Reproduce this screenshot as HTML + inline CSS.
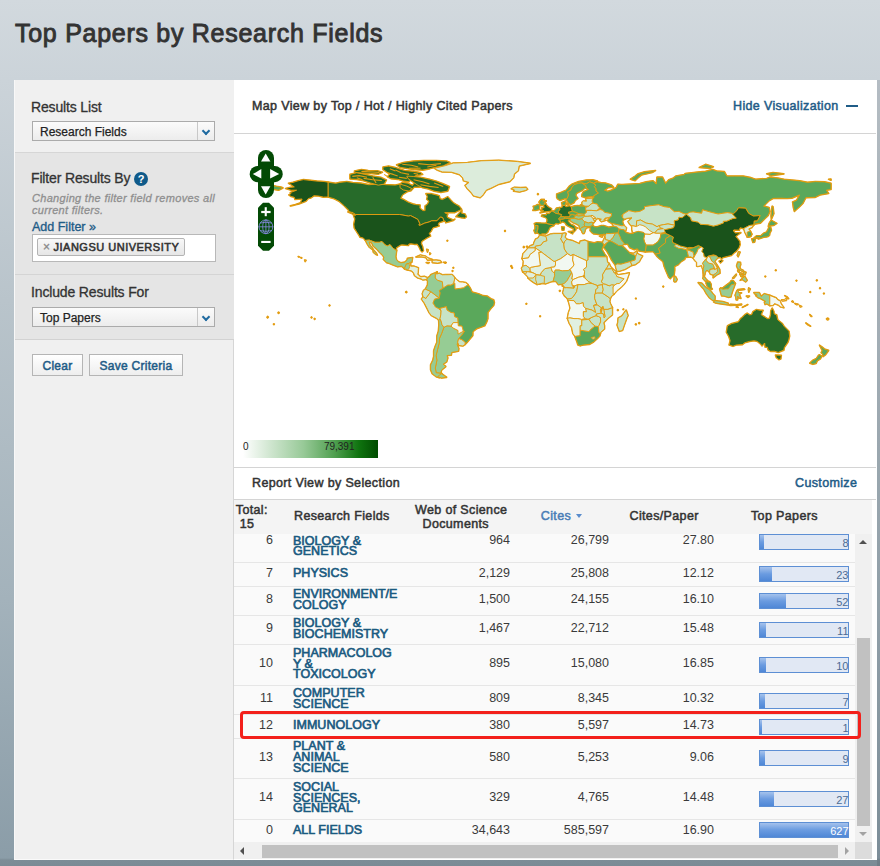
<!DOCTYPE html>
<html><head><meta charset="utf-8">
<style>
*{box-sizing:border-box;margin:0;padding:0}
html,body{width:880px;height:866px;overflow:hidden}
body{position:relative;font-family:"Liberation Sans",sans-serif;color:#333;
background:linear-gradient(to bottom,#d2d9de 0px,#cbd3d9 80px,#b9c4cb 300px,#a3b2bb 600px,#8b9da8 858px,#7c8d97 860px,#7a8b95 866px)}
.a{position:absolute;white-space:nowrap}
#title{left:15px;top:18px;font-size:25px;font-weight:normal;-webkit-text-stroke:0.9px #333;letter-spacing:0.72px;color:#333;line-height:30px}
#side{left:14px;top:80px;width:220px;height:780px;background:#f0f0f0;border-left:1px solid #f8f8f8;border-bottom:1px solid #fafafa;border-right:1px solid #d6d6d6}
.sec{position:absolute;left:0;width:219px}
.lbl{font-size:14px;color:#333;letter-spacing:-0.15px;-webkit-text-stroke:0.3px currentColor}
.dd{position:absolute;left:17px;width:183px;height:20px;border:1px solid #ababab;background:linear-gradient(#fbfbfb,#ececec);font-size:12px;line-height:20px;padding-left:7px;color:#222;-webkit-text-stroke:0.25px currentColor}
.dd .ar{position:absolute;right:0;top:0;width:17px;height:18px;border-left:1px solid #c8c8c8}
.btn{position:absolute;top:274px;height:22px;border:1px solid #b5b5b5;background:linear-gradient(#ffffff,#eeeeee);font-size:12px;font-weight:normal;-webkit-text-stroke:0.5px currentColor;letter-spacing:0.28px;color:#1f5c87;text-align:center;line-height:22px}
.help{left:119px;top:92px;width:14px;height:14px;border-radius:50%;background:#0f5a8a;color:#fff;font-size:11px;font-weight:bold;text-align:center;line-height:14px}
.hint{font-size:11px;font-style:italic;color:#8f8f8f;-webkit-text-stroke:0.3px currentColor;line-height:11.5px;letter-spacing:0.3px}
.addf{font-size:12.5px;color:#1f5c87;line-height:14px;-webkit-text-stroke:0.35px currentColor}
.fbox{left:17px;top:154px;width:184px;height:28px;background:#fff;border:1px solid #b8b8b8}
.tag{position:absolute;left:4px;top:3px;height:18px;width:148px;border:1px solid #b4b4b4;border-radius:2px;background:linear-gradient(#f8f8f8,#e6e6e6);font-size:11px;font-weight:normal;-webkit-text-stroke:0.55px #333;color:#333;line-height:16px;letter-spacing:0.5px;padding-left:5px}
.tag .x{color:#888;-webkit-text-stroke:0.3px #888;font-size:12px;margin-right:3px}
.chev{position:absolute;left:5px;top:6px;width:6px;height:6px;border-right:2px solid #1f6aa0;border-bottom:2px solid #1f6aa0;transform:rotate(45deg)}
#main{left:234px;top:80px;width:643px;height:780px;background:#fff}
.hd{font-size:12.5px;font-weight:bold}
</style>
<style>
#main{left:234px;top:80px;width:643px;height:780px;background:#fff}
.hd{font-size:12.5px;font-weight:normal;-webkit-text-stroke:0.5px currentColor;letter-spacing:0.36px;line-height:14px;color:#333}
.ln{position:absolute;left:0;width:642px;height:1px;background:#d4d4d4}
.th{position:absolute;font-size:12.5px;font-weight:normal;-webkit-text-stroke:0.5px currentColor;letter-spacing:0.36px;line-height:14px;color:#333;white-space:nowrap}
.row{position:absolute;left:0;width:621px;background:#fafafa;border-top:1px solid #e6e6e6}
.c{position:absolute;top:0;bottom:0;display:flex;align-items:center}
.num{font-size:12.5px;line-height:11px;color:#3a3a3a;justify-content:flex-end;padding-bottom:4px}
.fld{font-size:12.5px;font-weight:normal;-webkit-text-stroke:0.65px currentColor;letter-spacing:0.02px;line-height:10.9px;color:#1a5a80;padding-bottom:2px;white-space:nowrap}
.bar{position:absolute;left:525px;width:90px;height:16px;border:1px solid #5d8fd4;background:#e1e8f4}
.bar .f{position:absolute;left:0;top:0;bottom:0;background:linear-gradient(#a5c2ec,#6a9be0 50%,#4f87d6)}
.bar .v{position:absolute;right:-0.5px;top:2px;font-size:11px;line-height:13px;color:#4c6b95}
</style>
</head><body>
<div class="a" id="title">Top Papers by Research Fields</div>
<div class="a" id="side">
  <div class="sec" style="top:0;height:72px;background:#f0f0f0"></div>
  <div class="sec" style="top:72px;height:1px;background:#d6d6d6"></div>
  <div class="sec" style="top:73px;height:121px;background:#e5e5e5"></div>
  <div class="sec" style="top:194px;height:1px;background:#d4d4d4"></div>
  <div class="sec" style="top:195px;height:64px;background:#e5e5e5"></div>
  <div class="sec" style="top:259px;height:1px;background:#d2d2d2"></div>
  <div class="a lbl" style="left:16px;top:19px">Results List</div>
  <div class="dd" style="top:41px">Research Fields<div class="ar"><i class="chev"></i></div></div>
  <div class="a lbl" style="left:16px;top:90px">Filter Results By</div>
  <div class="a help">?</div>
  <div class="a hint" style="left:17px;top:113px">Changing the filter field removes all<br>current filters.</div>
  <div class="a addf" style="left:17px;top:140px">Add Filter &raquo;</div>
  <div class="a fbox"><div class="tag"><span class="x">&times;</span>JIANGSU UNIVERSITY</div></div>
  <div class="a lbl" style="left:16px;top:204px">Include Results For</div>
  <div class="dd" style="top:227px">Top Papers<div class="ar"><i class="chev"></i></div></div>
  <div class="btn" style="left:17px;width:51px">Clear</div>
  <div class="btn" style="left:74px;width:94px">Save Criteria</div>
</div>
<div class="a" style="left:877px;top:80px;width:3px;height:786px;background:rgba(30,40,50,0.13)"></div>
<div class="a" id="main">
<div class="a hd" style="left:18px;top:19.47px">Map View by Top / Hot / Highly Cited Papers</div>
<div class="a hd" style="left:499px;top:19.47px;color:#1f5c87">Hide Visualization</div>
<div class="a" style="left:612px;top:25px;width:12px;height:2px;background:#1f5c87"></div>
<div class="ln" style="top:53px"></div>
<div class="a" style="left:0;top:54px;width:643px;height:333px;overflow:hidden"><svg width="643" height="333" viewBox="234 134 643 333" style="position:absolute;left:0;top:0">
<g stroke="#e39c10" stroke-width="1.7" stroke-linejoin="round" fill="#e39c10">
<polygon points="328.0,182.2 335.8,183.3 339.7,182.4 346.8,181.6 353.0,182.6 360.9,183.2 368.7,184.7 379.7,184.0 385.9,184.7 395.3,185.1 400.0,184.0 402.4,182.4 407.9,183.2 412.6,185.5 414.9,181.9 422.0,184.0 420.4,187.1 414.1,187.1 411.0,190.7 407.1,191.8 402.4,194.9 400.7,198.4 403.2,199.3 407.9,202.0 412.6,203.9 415.7,204.6 420.1,205.0 419.9,208.2 422.8,210.6 425.1,210.6 425.1,205.9 427.5,204.3 429.0,201.2 426.7,199.2 427.5,196.5 425.9,193.7 431.4,193.7 436.1,194.9 439.2,195.7 440.0,198.8 442.3,199.6 445.5,198.1 447.8,196.8 451.0,200.4 453.3,202.8 455.7,204.3 458.8,205.9 461.6,209.3 459.1,210.6 454.9,212.6 444.7,212.6 447.8,214.5 447.0,215.6 447.4,217.5 453.3,220.0 454.9,219.2 453.3,220.5 449.4,221.6 445.8,222.8 445.2,221.1 443.9,221.1 442.7,217.7 440.5,217.0 436.9,220.8 431.7,220.8 429.0,222.0 424.8,223.1 419.6,225.5 418.7,225.0 419.8,223.9 417.9,219.5 416.0,218.4 410.5,215.6 408.5,216.1 399.7,214.5 355.7,214.5 353.0,213.0 349.1,211.7 348.3,209.8 344.4,205.9 338.9,201.2 334.2,198.8 328.0,197.0"/>
<polygon points="353.5,215.5 354.9,218.9 353.8,224.2 354.3,228.0 356.9,232.1 359.3,235.7 359.9,237.2 363.4,238.0 365.4,240.4 369.2,240.1 375.0,242.3 379.4,242.3 382.0,241.5 385.1,244.9 387.5,245.9 390.0,244.6 393.0,248.2 396.6,250.7 396.3,247.7 400.3,245.2 401.9,244.8 405.5,245.1 408.5,245.5 408.8,244.0 411.0,243.7 414.9,244.3 417.3,244.1 419.3,247.4 420.7,250.4 422.1,251.8 423.4,250.6 422.6,246.6 421.3,243.5 421.8,241.3 424.8,239.3 426.8,238.0 430.6,236.1 429.3,233.3 431.1,231.3 432.9,227.8 436.1,226.9 439.2,226.0 438.3,224.5 438.9,222.8 443.9,221.1 442.7,217.7 440.5,217.0 436.9,220.8 431.7,220.8 429.0,222.0 424.8,223.1 419.6,225.5 418.7,225.0 419.8,223.9 417.9,219.5 416.0,218.4 410.5,215.6 408.5,216.1 399.7,214.5 355.7,214.5"/>
<polygon points="328.0,182.2 324.0,181.5 317.0,181.1 310.7,180.4 303.4,179.6 298.2,180.8 293.0,182.4 288.5,183.3 292.7,185.8 294.3,186.9 290.3,187.4 285.6,188.5 291.1,190.2 296.6,190.2 290.3,192.6 291.0,193.5 288.8,194.9 291.1,196.5 294.3,197.3 295.0,199.5 302.1,199.0 300.5,202.8 293.5,205.3 290.3,205.9 299.0,203.9 306.0,201.2 308.4,198.5 311.0,197.9 313.9,195.7 318.6,196.0 323.3,197.1 328.0,197.0"/>
<polygon points="350.0,174.4 356.8,172.7 364.8,174.4 372.7,176.1 380.7,177.3 386.4,180.1 384.1,184.1 378.4,185.2 370.5,183.0 363.6,180.7 356.8,179.3 350.0,179.0"/>
<polygon points="354.5,171.0 361.4,169.5 368.2,170.5 377.3,170.8 382.4,172.2 378.4,174.1 370.5,173.4 361.4,173.0 354.5,172.3"/>
<polygon points="383.0,167.0 388.6,166.2 395.5,167.6 398.9,168.8 404.5,170.5 413.6,171.4 420.5,172.7 422.7,174.4 415.9,175.6 411.9,177.8 409.1,181.8 403.4,180.9 397.7,179.3 390.9,178.6 387.5,176.7 389.8,174.1 386.4,171.8 383.0,169.5"/>
<polygon points="396.6,164.8 403.4,162.5 413.6,161.1 423.9,160.5 436.4,160.5 446.6,161.1 450.0,162.5 443.2,165.9 436.4,167.0 429.5,168.8 422.7,170.1 413.6,169.5 406.8,168.4 400.0,167.3"/>
<polygon points="406.8,176.1 413.6,176.5 420.5,177.3 429.5,179.3 436.4,181.2 443.2,183.9 449.4,186.6 447.7,191.1 440.9,192.3 434.1,191.1 428.4,188.9 422.7,187.7 418.2,185.5 414.8,183.2 411.4,180.9 408.0,178.6"/>
<polygon points="400.0,184.1 406.8,186.1 411.9,188.6 409.1,191.1 403.4,190.0 400.0,187.7"/>
<polygon points="456.0,216.7 461.9,210.4 461.6,213.3 465.1,214.0 466.3,216.9 464.8,218.1 461.3,217.7 457.2,216.7"/>
<polygon points="355.4,215.5 352.2,213.7 347.9,211.9 353.0,212.5"/>
<polygon points="434.5,168.3 445.5,165.6 453.3,163.1 467.4,162.5 481.5,160.8 498.8,160.3 517.6,161.6 530.1,163.4 519.1,165.9 518.3,170.6 514.4,173.8 513.6,177.7 509.7,181.6 498.8,184.3 490.9,188.2 486.2,190.2 483.1,194.9 480.1,197.6 473.7,196.0 470.5,191.8 467.4,188.7 465.1,185.5 469.0,182.4 463.5,180.8 462.7,177.7 459.6,174.6 451.7,172.2 442.3,171.9 436.9,169.9"/>
<polygon points="511.3,188.7 514.4,187.3 520.7,187.6 526.2,187.4 527.6,189.3 525.4,190.5 519.6,192.0 513.6,191.2 514.7,190.1"/>
<polygon points="365.4,240.4 369.2,240.1 375.0,242.3 379.4,242.3 382.0,241.5 385.1,244.9 387.5,245.9 390.0,244.6 393.0,248.2 396.6,250.7 395.8,256.8 396.6,260.0 398.5,261.8 400.8,262.8 404.7,262.2 407.1,260.1 407.4,258.4 412.6,257.6 411.8,262.3 410.5,262.3 409.1,263.4 406.3,264.2 407.1,266.2 404.4,268.6 401.6,266.2 397.7,266.7 393.8,265.3 389.5,263.4 386.7,262.6 383.4,259.3 383.9,257.1 382.0,254.5 378.9,251.7 377.5,249.8 375.0,247.6 373.1,245.9 371.5,242.4 369.0,241.9 369.9,245.1 372.1,247.7 374.0,250.6 376.5,253.4 377.3,255.1 376.1,254.5 373.4,252.4 372.9,249.8 369.5,247.4 367.4,244.3"/>
<polygon points="404.4,268.6 406.3,264.2 409.1,263.4 410.5,262.3 410.7,266.2 414.1,266.2 418.4,267.8 418.1,272.5 417.7,274.2 420.4,276.9 424.3,276.4 427.6,277.7 426.4,279.5 422.8,279.9 421.2,278.8 417.9,278.0 414.6,275.6 413.4,272.5 411.6,270.9 408.7,270.1 405.5,269.4"/>
<polygon points="404.4,268.6 406.3,264.2 409.1,263.4 409.6,266.4 409.1,268.6 407.6,269.7"/>
<polygon points="415.9,257.0 420.4,255.1 425.1,256.0 428.2,258.1 432.6,259.6 427.5,260.1 425.9,257.6 421.2,256.7"/>
<polygon points="432.3,260.3 436.1,260.1 440.0,260.7 441.7,262.3 437.6,263.1 432.3,262.6"/>
<polygon points="426.2,262.5 429.3,262.6 428.2,263.4"/>
<polygon points="443.6,262.3 446.1,262.5 445.5,263.1"/>
<polygon points="426.7,249.3 428.2,249.8 427.5,252.1"/>
<polygon points="429.8,252.9 430.6,253.7 429.8,254.5"/>
<polygon points="304.6,260.0 306.0,260.3 305.2,261.5"/>
<polygon points="300.8,257.5 301.8,257.9 301.3,258.1"/>
<polygon points="298.2,256.5 299.3,256.8 299.0,257.1"/>
<polygon points="468.0,284.7 470.5,288.5 472.1,292.1 478.4,293.7 483.1,295.7 487.0,296.0 490.9,298.8 493.7,299.9 494.4,302.6 493.7,305.4 490.9,308.5 487.9,312.5 487.8,318.7 486.7,321.9 484.7,325.8 480.7,327.3 476.8,328.6 472.9,331.7 472.7,335.6 469.8,339.1 466.6,343.0 465.2,344.3 465.1,342.2 461.8,339.7 458.6,338.6 461.3,335.5 464.4,331.4 463.3,331.3 462.7,328.9 461.9,326.1 458.3,325.9 458.0,322.6 457.7,317.9 454.6,316.7 454.1,312.9 451.0,312.5 447.0,310.1 446.4,306.7 440.0,308.4 438.4,308.5 435.4,307.0 434.5,305.4 432.9,303.1 434.5,299.1 439.2,297.9 440.0,292.9 439.2,290.5 443.1,288.0 447.8,285.0 451.0,285.0 454.9,283.2 455.0,288.9 460.4,288.3 463.5,287.7"/>
<polygon points="464.4,331.4 461.3,335.5 458.6,338.6 457.7,342.2 457.2,344.7 458.8,348.5 458.5,351.2 451.7,352.4 451.3,355.2 447.0,355.5 447.8,357.9 446.7,361.8 443.1,364.2 445.8,366.5 441.6,370.1 440.8,372.8 441.7,373.4 436.2,372.8 435.3,368.1 436.9,360.2 436.1,355.5 437.6,349.3 439.2,343.0 439.5,338.3 441.6,333.6 443.9,327.3 447.0,325.8 451.0,326.1 453.3,328.1 458.0,330.5 463.3,331.3"/>
<polygon points="440.0,318.7 438.7,320.0 438.9,325.0 438.4,331.3 436.9,336.0 436.9,342.2 435.3,346.1 433.7,350.8 433.7,356.3 432.9,360.2 430.6,364.9 430.6,369.6 432.2,373.6 436.1,376.7 439.2,377.8 441.7,373.4 436.2,372.8 435.3,368.1 436.9,360.2 436.1,355.5 437.6,349.3 439.2,343.0 439.5,338.3 441.6,333.6 443.9,327.3 442.0,324.7 441.1,321.1"/>
<polygon points="441.6,373.7 446.6,377.3 441.6,378.0 437.6,376.7 440.0,374.7"/>
<polygon points="423.1,296.8 421.5,299.1 424.3,303.1 427.5,309.3 429.0,312.5 431.4,315.6 436.9,318.4 438.7,320.0 440.0,318.7 440.8,314.8 441.1,310.9 438.4,308.5 435.4,307.0 434.5,305.4 432.9,303.1 434.5,299.1 439.2,297.9 435.3,295.1 430.9,291.6 427.5,296.0 425.9,298.4"/>
<polygon points="423.1,296.8 425.9,298.4 427.5,296.0 430.9,291.6 427.5,290.0 425.4,289.1 423.5,290.5 422.3,293.7"/>
<polygon points="427.6,277.7 429.8,276.4 430.6,274.8 432.9,273.7 435.3,272.8 437.2,271.9 435.4,274.1 435.3,278.0 437.6,280.3 442.3,281.6 443.1,288.0 439.2,290.5 440.0,292.9 439.2,297.9 435.3,295.1 430.9,291.6 427.5,290.0 425.4,289.1 427.5,285.0 427.6,281.1 426.8,279.9"/>
<polygon points="437.2,271.9 436.4,274.1 439.2,273.3 442.3,274.8 445.5,274.7 448.6,274.7 451.7,274.5 453.3,275.6 454.9,278.0 453.8,283.2 451.0,285.0 447.8,285.0 443.1,288.0 442.3,281.6 437.6,280.3 435.3,278.0 435.4,274.1"/>
<polygon points="454.9,278.0 457.2,280.3 459.6,281.9 462.7,282.1 465.8,282.7 468.0,284.7 463.5,287.7 460.4,288.3 455.0,288.9 454.9,283.2 453.8,283.2"/>
<polygon points="440.0,318.7 441.1,321.1 442.0,324.7 443.9,327.3 447.0,325.8 451.0,326.1 453.3,322.6 458.0,322.6 457.7,317.9 454.6,316.7 454.1,312.9 451.0,312.5 447.0,310.1 446.4,306.7 440.0,308.4 441.1,310.9 440.8,314.8"/>
<polygon points="458.0,322.6 458.3,325.9 461.9,326.1 462.7,328.9 463.3,331.3 458.0,334.1 458.0,330.5 453.3,328.1 451.0,326.1 453.3,322.6"/>
<polygon points="465.2,344.3 462.9,346.0 458.8,345.4 457.7,342.2 458.6,338.6 461.8,339.7 465.1,342.2"/>
<polygon points="597.2,181.9 600.6,182.7 605.3,183.0 611.6,185.1 613.5,187.1 608.4,187.6 604.5,190.2 607.7,191.3 611.6,190.1 616.3,187.6 617.8,184.3 621.8,184.6 632.0,184.0 639.8,183.5 646.1,181.9 653.1,180.8 656.2,184.1 657.0,177.2 662.5,177.2 665.6,183.5 668.8,179.7 673.5,178.0 675.8,176.1 684.4,174.6 685.2,173.5 697.8,172.1 705.6,171.4 712.7,169.5 716.6,171.0 724.4,171.7 726.8,176.1 734.6,176.1 743.2,176.1 751.0,177.7 755.7,179.3 766.7,178.5 769.8,177.2 777.7,178.0 783.9,179.3 799.6,180.8 807.5,182.4 815.3,181.6 824.7,181.9 831.0,183.3 831.0,189.4 826.3,190.2 828.6,193.4 820.0,194.9 815.3,197.3 805.9,197.6 804.3,200.7 802.8,203.5 799.6,206.7 794.4,211.4 793.4,207.5 792.6,202.0 796.5,200.4 799.6,194.9 791.8,198.1 787.1,198.5 780.8,198.2 773.0,198.4 769.1,200.7 763.6,206.1 769.1,207.5 769.8,211.4 768.3,215.3 765.1,218.4 760.4,223.1 755.4,223.9 753.7,225.0 754.2,220.9 757.3,220.8 760.1,215.6 753.4,216.1 748.7,213.4 745.6,208.2 738.5,207.8 736.9,210.6 733.5,213.7 731.5,213.3 727.5,212.6 718.1,214.0 711.9,212.5 702.5,209.8 701.7,213.3 693.1,211.9 686.5,214.2 683.7,213.7 679.0,211.4 674.3,211.7 669.6,207.5 664.1,206.7 658.6,204.8 650.8,205.7 644.5,206.7 644.5,209.0 639.8,211.4 635.1,212.0 628.8,210.6 624.9,213.0 622.9,214.2 621.8,215.3 622.5,217.7 624.9,219.2 623.3,220.0 622.5,221.6 623.3,223.9 624.1,225.5 621.8,225.8 617.1,224.7 611.6,223.3 608.4,221.6 607.7,220.3 610.0,217.7 608.8,217.5 611.1,216.4 611.6,213.7 608.4,213.1 604.5,212.3 602.8,210.3 600.1,209.5 600.1,207.8 598.3,206.7 597.3,204.2 593.1,203.2 592.0,201.2 592.8,198.2 594.3,197.0 592.6,196.5 595.1,194.9 598.3,192.9 595.9,191.0 595.9,188.7 594.3,186.6 595.9,185.2 594.0,184.0 593.6,183.2"/>
<polygon points="581.8,204.6 584.6,206.1 579.6,206.1 580.2,205.1"/>
<polygon points="630.4,179.3 635.1,176.1 638.2,173.8 644.5,171.9 655.5,170.6 652.3,172.5 641.4,175.0 638.2,177.7 635.1,180.7"/>
<polygon points="699.3,167.5 705.6,164.4 713.4,166.7 710.3,168.3"/>
<polygon points="766.7,173.8 773.0,172.5 783.9,173.8 771.4,175.7"/>
<polygon points="828.6,179.3 831.0,179.1 831.0,180.2"/>
<polygon points="771.4,219.2 773.8,213.7 773.0,206.7 772.2,206.2 771.4,211.4 771.1,216.1"/>
<polygon points="266.8,184.0 276.2,186.3 280.9,187.1 283.0,187.9 278.6,190.2 270.0,188.7 266.8,189.4"/>
<polygon points="535.0,225.5 535.1,228.6 534.0,230.5 535.1,233.3 537.3,233.0 537.1,231.0 537.9,229.2 538.1,225.6 536.1,225.3"/>
<polygon points="535.0,225.5 534.3,223.6 536.4,222.8 541.1,223.1 546.1,223.3 550.0,224.2 553.9,224.9 553.9,225.6 550.2,227.1 548.9,229.4 547.6,232.4 545.6,233.8 542.0,233.8 540.1,234.9 538.9,233.6 537.3,233.0 537.1,231.0 537.9,229.2 538.1,225.6 536.1,225.3"/>
<polygon points="546.1,223.3 547.0,221.4 547.0,218.9 545.5,217.5 541.5,216.2 541.8,215.1 544.2,214.8 546.4,215.1 546.7,213.4 549.2,213.7 551.4,211.5 552.8,211.2 555.5,213.1 558.0,213.7 561.7,214.5 560.8,216.7 558.5,218.9 559.9,220.0 560.7,222.7 558.3,223.8 556.0,223.3 553.9,224.9 550.0,224.2"/>
<polygon points="552.8,211.2 554.2,210.8 555.6,209.5 556.4,208.2 559.7,207.6 559.9,209.5 558.3,211.7 558.9,213.7 558.0,213.7 555.5,213.1"/>
<polygon points="559.7,207.6 562.2,207.3 562.4,205.3 564.4,205.4 566.1,206.7 569.3,205.9 571.2,206.8 571.8,208.9 572.4,211.2 568.0,212.5 570.5,214.8 569.3,216.9 564.6,216.9 560.8,216.7 561.7,214.5 558.9,213.7 558.3,211.7 559.9,209.5"/>
<polygon points="562.4,205.3 561.6,202.8 565.4,200.9 566.0,202.8 565.2,205.1 564.4,205.4"/>
<polygon points="566.1,204.0 568.6,203.5 568.2,205.1"/>
<polygon points="558.5,218.9 560.8,216.7 564.6,216.9 565.4,218.4 563.0,219.2 559.9,219.4"/>
<polygon points="564.6,216.9 569.3,216.9 570.5,214.8 572.4,214.5 575.5,215.3 574.8,216.9 574.0,218.1 570.4,218.4 565.4,218.4"/>
<polygon points="559.9,219.4 560.7,222.7 562.7,221.7 565.4,223.1 566.1,224.7 568.5,226.3 570.8,227.4 573.5,228.6 573.3,231.8 574.1,231.8 575.9,229.6 574.8,227.5 577.9,228.3 575.5,227.1 574.0,225.6 570.8,224.2 568.5,221.6 568.2,220.0 570.4,219.7 570.4,218.4 565.4,218.4 563.0,219.2"/>
<polygon points="568.3,231.6 573.3,231.3 572.6,233.8"/>
<polygon points="561.7,226.9 564.3,227.1 563.9,230.2 562.1,230.2"/>
<polygon points="540.0,212.8 544.2,211.9 551.1,211.1 551.6,208.7 549.2,207.5 546.9,205.7 545.8,203.7 543.9,203.4 546.1,201.0 542.6,201.0 544.2,199.5 541.1,199.5 539.2,202.0 540.1,204.6 541.2,205.3 543.7,205.4 544.2,207.6 541.7,207.8 542.3,209.3 540.6,210.3 543.9,210.8"/>
<polygon points="545.8,203.7 543.9,203.4 546.1,201.0 542.6,201.0 544.2,199.5 541.1,199.5 539.2,202.0 540.1,204.6 541.2,205.3 543.7,205.4 545.0,204.3"/>
<polygon points="539.5,209.5 539.5,206.8 540.1,205.3 537.5,204.6 535.6,205.7 533.2,206.4 534.0,208.2 532.9,210.4 535.6,210.4"/>
<polygon points="557.5,198.8 559.9,200.4 565.4,198.5 566.9,198.8 568.0,196.5 568.5,194.9 567.7,191.8 570.8,190.2 571.6,187.9 574.0,184.7 578.7,183.2 581.8,183.0 586.5,183.8 589.6,181.8 593.6,183.2 597.5,181.1 592.8,179.9 586.5,180.0 578.7,181.6 572.4,184.0 569.3,186.3 566.1,190.2 561.4,192.3 556.7,194.1 556.7,197.3"/>
<polygon points="566.1,199.0 568.6,203.2 570.8,204.5 574.0,202.8 575.1,200.6 577.9,198.4 575.9,195.7 576.3,193.4 579.5,191.8 582.6,190.2 584.6,188.2 586.5,188.2 585.7,185.5 581.8,183.0 578.7,183.2 574.0,184.7 571.6,187.9 570.8,190.2 567.7,191.8 568.5,194.9 568.0,196.5 566.9,198.8"/>
<polygon points="581.8,196.5 584.9,197.4 589.6,196.7 592.6,196.5 595.1,194.9 598.3,192.9 595.9,191.0 595.9,188.7 594.3,186.6 595.9,185.2 594.0,184.0 593.6,183.2 589.6,181.8 586.5,183.8 581.8,183.0 585.7,185.5 586.5,188.2 588.5,189.4 583.4,191.8 582.1,194.1"/>
<polygon points="582.0,202.3 582.1,204.6 584.6,206.1 588.9,206.2 590.9,204.0 593.1,203.2 592.0,201.2 592.8,198.2 585.7,198.5 586.5,201.2 583.4,201.0"/>
<polygon points="571.2,206.8 574.8,205.9 578.0,205.6 579.6,206.1 584.6,206.1 585.7,207.5 585.7,209.8 586.5,212.2 584.3,214.4 578.7,213.7 575.5,212.3 572.4,211.2 571.8,208.9"/>
<polygon points="568.0,212.5 572.4,211.2 575.5,212.3 578.4,213.7 575.5,215.3 572.4,214.5 570.5,214.8"/>
<polygon points="575.5,215.3 578.4,213.7 584.3,214.4 583.7,215.5 578.7,216.1"/>
<polygon points="574.0,218.1 574.8,216.9 575.5,215.3 578.7,216.1 583.7,215.5 584.5,216.2 581.8,218.9 578.4,219.4 574.8,218.4"/>
<polygon points="570.4,219.7 570.2,220.5 573.2,222.7 576.3,223.9 579.1,225.5 579.5,227.8 580.2,229.1 581.8,227.4 584.9,226.6 584.2,224.7 584.9,222.4 584.5,221.6 581.8,218.9 578.4,219.4 574.8,218.4 570.4,218.4"/>
<polygon points="581.8,218.9 584.5,216.2 587.3,216.2 590.6,215.8 593.1,218.4 593.7,220.3 595.3,220.8 593.7,222.7 591.2,222.2 588.5,223.0 584.5,221.6"/>
<polygon points="590.6,215.8 592.0,215.3 594.7,216.9 595.9,218.4 593.1,218.4"/>
<polygon points="584.5,221.6 584.9,222.4 584.2,224.7 584.9,226.6 589.8,226.6 592.8,225.5 592.6,223.6 593.7,222.7 591.2,222.2 588.5,223.0"/>
<polygon points="580.2,229.1 581.8,227.4 584.9,226.6 589.8,226.6 590.1,227.2 586.5,227.8 585.4,229.4 584.9,231.4 584.2,233.3 582.9,233.6 582.0,232.1 581.8,231.0"/>
<polygon points="585.7,207.5 588.9,206.2 590.9,204.0 593.1,203.2 597.3,204.2 598.3,206.7 600.1,207.8 597.5,209.8 596.7,210.8 591.2,210.4 586.5,210.4 585.7,209.8"/>
<polygon points="586.5,210.4 591.2,210.4 596.7,210.8 600.1,209.5 602.8,210.3 604.5,212.3 608.4,213.1 611.6,213.7 611.1,216.4 608.8,217.5 605.3,218.1 603.7,219.7 606.1,220.3 601.4,221.6 599.8,220.2 601.4,219.2 597.5,218.3 595.9,219.5 595.3,220.8 593.7,220.3 593.1,218.4 595.9,218.4 594.7,216.9 592.0,215.3 590.6,215.8 587.3,216.2 584.5,216.2 584.3,214.4 586.5,212.2"/>
<polygon points="589.8,226.6 592.8,225.5 594.3,226.7 597.5,226.9 601.4,225.5 603.7,225.5 608.8,227.2 613.9,226.3 617.1,226.9 619.1,229.1 618.2,232.9 615.3,233.2 611.6,233.5 606.4,233.6 605.3,235.0 604.5,233.9 602.2,234.6 599.8,234.7 596.7,234.1 593.6,233.8 591.8,232.5 590.1,230.7 590.4,228.6"/>
<polygon points="599.5,236.3 603.1,235.4 602.2,237.1"/>
<polygon points="611.6,223.3 617.1,224.7 621.8,225.8 624.1,225.5 626.5,227.8 625.7,231.0 624.1,229.9 619.1,229.1 617.1,226.9 613.9,226.3"/>
<polygon points="622.9,214.2 624.9,213.0 628.8,210.6 635.1,212.0 639.8,211.4 644.5,209.0 644.5,206.7 650.8,205.7 658.6,204.8 664.1,206.7 669.6,207.5 674.3,211.7 679.0,211.4 683.7,213.7 686.5,214.2 682.1,217.7 679.0,217.3 678.2,220.0 674.3,220.8 674.6,225.2 668.0,223.9 663.3,224.7 659.4,225.5 657.0,226.7 652.3,224.1 646.1,223.1 640.6,220.0 636.7,220.8 636.3,226.6 632.0,225.5 631.2,225.8 629.6,223.9 628.0,221.6 629.6,220.0 632.0,217.7 626.5,218.4 624.9,219.2 622.5,217.7"/>
<polygon points="636.3,226.6 636.7,220.8 640.6,220.0 646.1,223.1 652.3,224.1 657.0,226.7 659.4,225.5 660.2,227.8 663.3,228.6 657.8,229.4 654.7,233.0 653.1,232.7 650.0,234.4 644.8,234.1 643.7,232.5 638.2,231.4 634.3,232.5 632.7,232.9 632.0,229.4 632.0,226.3"/>
<polygon points="631.8,225.6 636.3,226.6 639.8,224.7 642.9,225.5 645.3,226.7 649.2,230.2 653.1,232.7 650.0,234.4 644.8,234.1 643.7,232.5 638.2,231.4 634.3,232.5 632.7,232.9 632.0,229.4"/>
<polygon points="659.4,225.5 663.3,224.7 668.0,223.9 674.6,225.2 673.5,227.8 666.4,229.4 665.6,232.5 660.9,233.3 655.5,233.3 654.7,233.0 657.8,229.4 663.3,228.6 660.2,227.8"/>
<polygon points="643.7,238.8 644.5,241.9 646.1,245.1 653.1,245.1 657.8,241.9 660.2,238.0 660.9,234.1 665.6,232.5 660.9,233.3 655.5,233.3 654.7,233.0 653.1,232.7 650.0,234.4 644.8,234.1"/>
<polygon points="645.3,251.8 653.1,251.5 655.5,254.2 660.2,253.1 658.6,248.2 662.5,245.1 665.6,242.7 665.6,238.8 670.3,235.7 665.6,233.3 660.9,234.1 660.2,238.0 657.8,241.9 653.1,245.1 646.1,245.1"/>
<polygon points="618.2,232.9 619.1,229.1 624.1,229.9 625.7,232.4 629.6,233.6 633.5,233.5 632.7,232.9 634.3,232.5 638.2,231.4 643.7,232.5 644.8,234.1 643.7,238.8 644.5,241.9 646.1,245.1 645.3,251.8 639.0,251.0 637.4,248.8 634.3,249.6 629.6,247.6 627.6,244.0 624.9,244.4 624.1,243.5 623.6,242.7 621.0,239.6 620.2,237.2"/>
<polygon points="615.3,233.2 618.2,232.9 620.2,237.2 621.0,239.6 623.6,242.7 624.1,243.5 623.8,244.3 621.8,245.7 618.6,245.5 613.1,242.3 610.0,240.8 613.1,237.2"/>
<polygon points="606.4,233.6 611.6,233.5 615.3,233.2 613.1,237.2 610.0,240.8 605.3,239.6 605.0,236.8 605.3,235.0"/>
<polygon points="603.7,239.6 605.0,236.8 605.3,239.6 610.0,240.8 606.9,242.7 603.7,245.1 602.6,242.3"/>
<polygon points="603.7,247.4 606.9,242.7 610.0,240.8 613.1,242.3 618.6,245.5 621.8,245.7 624.1,247.4 627.2,250.6 629.6,252.9 635.9,255.7 635.1,260.0 630.4,261.5 624.9,263.1 621.0,264.2 616.8,263.9 615.5,265.6 611.6,260.0 610.0,256.8 606.9,251.3"/>
<polygon points="615.5,265.6 616.8,263.9 621.0,264.2 624.9,263.1 630.4,261.5 632.0,265.3 624.9,269.4 619.4,271.2 617.1,271.4 615.8,267.8"/>
<polygon points="635.9,255.7 637.0,252.9 638.2,254.0 642.6,256.0 640.6,259.2 639.5,261.5 637.4,263.1 635.1,264.7 632.0,265.3 630.4,261.5 635.1,260.0"/>
<polygon points="629.6,252.9 633.5,253.4 637.0,250.9 637.0,252.9 635.9,255.7"/>
<polygon points="655.5,254.2 657.0,256.4 659.4,258.7 663.0,261.5 664.1,266.2 666.1,271.2 668.8,277.4 670.3,278.6 671.4,277.4 674.1,275.2 674.7,270.1 674.6,266.5 678.2,264.7 681.3,261.5 684.9,259.2 685.2,257.5 688.4,257.1 688.4,256.0 687.6,252.9 686.8,249.8 689.1,250.4 693.1,252.1 693.8,255.3 695.1,255.3 697.0,252.1 698.1,249.0 701.4,247.1 698.5,245.4 693.1,247.7 689.1,249.1 686.8,248.2 687.1,249.9 681.3,248.4 675.8,244.0 672.7,242.4 672.4,240.4 673.5,237.2 670.8,235.7 670.3,235.7 665.6,238.8 665.6,242.7 662.5,245.1 658.6,248.2 660.2,253.1"/>
<polygon points="686.8,249.8 689.1,250.4 693.1,252.1 693.8,255.3 693.1,258.1 690.7,256.8 688.4,257.1 688.4,256.0 687.6,252.9"/>
<polygon points="674.4,246.2 676.1,244.0 680.5,246.0 687.1,247.6 687.1,249.9 681.3,248.4 679.0,248.5"/>
<polygon points="673.9,281.1 674.3,275.9 675.7,276.7 677.1,279.5 676.1,281.6 674.6,281.9"/>
<polygon points="664.2,229.6 666.4,229.4 673.5,227.8 674.6,225.2 674.3,220.8 678.2,220.0 679.0,217.3 682.1,217.7 686.5,214.2 690.7,217.7 691.5,220.8 697.8,222.0 700.9,224.4 708.0,224.7 713.4,226.1 718.1,224.9 723.6,222.8 723.2,221.3 726.8,221.1 733.0,218.4 736.2,218.1 731.5,213.3 733.5,213.7 736.9,210.6 738.5,207.8 745.6,208.2 748.7,213.4 753.4,216.1 760.1,215.6 757.3,220.8 754.2,220.9 753.7,225.0 749.5,225.5 743.7,228.6 740.1,227.8 739.3,230.2 733.8,229.9 733.3,231.0 735.4,233.0 740.9,232.7 737.7,234.9 735.7,236.5 737.7,238.8 739.8,241.6 739.9,242.9 740.1,244.6 739.1,247.4 736.3,251.3 733.8,253.1 731.5,255.4 727.5,256.4 722.8,257.6 721.6,258.7 720.6,257.5 718.1,257.6 716.1,255.6 713.4,254.8 709.0,256.0 708.0,256.4 706.4,257.6 704.0,256.8 703.6,253.7 701.7,251.3 703.2,248.1 701.4,247.1 698.5,245.4 693.1,247.7 689.1,247.4 686.8,248.2 687.1,247.6 680.5,246.0 676.1,244.0 672.7,242.4 672.4,240.4 673.5,237.2 670.8,235.7 665.6,233.3"/>
<polygon points="719.1,261.2 721.3,260.0 722.8,260.6 720.5,262.8"/>
<polygon points="686.5,214.2 689.9,212.2 693.1,211.9 701.7,213.3 702.5,209.8 711.9,212.5 718.1,214.0 727.5,212.6 731.5,213.3 736.2,218.1 733.0,218.4 726.8,221.1 723.2,221.3 723.6,222.8 718.1,224.9 713.4,226.1 708.0,224.7 700.9,224.4 697.8,222.0 691.5,220.8 690.7,217.7"/>
<polygon points="693.4,258.4 694.6,260.3 696.7,262.2 696.7,266.2 697.8,266.5 701.8,265.4 702.2,267.8 703.2,270.9 703.4,275.6 704.8,274.1 703.2,268.6 704.0,265.9 702.5,263.4 705.6,259.2 707.2,257.6 704.0,256.8 703.6,253.7 701.7,251.3 703.2,248.1 701.4,247.1 698.1,249.0 697.0,252.1 695.1,255.3"/>
<polygon points="703.2,270.9 703.6,274.8 702.9,278.5 705.3,281.1 707.2,280.6 708.7,281.6 706.4,279.5 704.3,276.9 704.8,274.1 705.6,271.4 707.0,270.1 709.5,272.2 710.0,269.4 713.4,268.9 714.2,267.0 712.7,263.9 708.7,263.1 706.4,260.7 705.6,259.2 702.5,263.4 704.0,265.9 703.2,268.6"/>
<polygon points="709.0,256.0 716.1,255.6 718.1,257.6 715.8,260.0 714.7,261.5 717.4,265.4 719.7,269.4 720.0,273.3 716.6,275.0 713.1,277.8 713.4,274.8 715.8,273.3 717.4,271.7 717.4,268.3 717.4,266.2 715.8,265.4 713.4,262.3 711.9,261.2 710.6,258.7"/>
<polygon points="706.4,259.2 708.0,256.4 709.0,256.0 710.6,258.7 711.9,261.2 713.4,262.3 715.8,265.4 717.4,268.3 714.8,269.5 714.2,267.0 712.7,263.9 708.7,263.1 706.4,260.7"/>
<polygon points="709.5,272.2 710.3,274.1 713.1,275.0 715.8,273.3 717.4,271.7 717.4,268.3 714.8,269.5 713.4,268.9 710.0,269.4"/>
<polygon points="706.1,281.3 708.4,282.2 709.7,281.6 711.1,284.2 711.1,287.4 712.3,289.1 711.1,289.3 707.6,286.9 706.1,283.5"/>
<polygon points="719.7,288.9 720.8,292.9 721.6,295.8 723.9,296.0 728.3,297.3 731.0,296.8 731.5,294.4 733.0,290.0 733.8,287.9 735.4,283.5 733.0,280.6 731.5,280.6 729.9,282.8 726.8,285.0 723.6,287.4 722.1,288.5 720.6,288.2"/>
<polygon points="720.6,288.2 722.8,289.3 725.7,288.9 728.3,288.9 729.9,286.6 731.5,284.6 733.8,284.2 735.4,283.5 733.0,280.6 731.5,280.6 729.9,282.8 726.8,285.0 723.6,287.4 722.1,288.5"/>
<polygon points="698.2,282.7 701.7,283.2 706.2,287.9 708.0,288.8 711.1,291.3 712.7,293.7 715.0,296.0 715.0,298.4 714.7,300.4 712.7,300.4 709.2,297.6 706.4,293.7 703.6,288.9 701.2,286.3"/>
<polygon points="713.7,302.0 715.0,300.7 718.1,301.0 722.8,301.5 728.3,303.4 728.2,304.9 722.8,304.1 718.1,303.5 715.6,302.9"/>
<polygon points="729.1,305.1 730.7,304.3 735.4,304.6 735.4,305.2 730.7,305.4"/>
<polygon points="736.2,304.8 741.6,304.1 741.6,304.8 736.9,305.2"/>
<polygon points="742.4,307.3 747.9,304.6 744.8,306.2"/>
<polygon points="736.2,307.0 738.2,307.3 736.9,306.2"/>
<polygon points="736.2,299.9 735.8,296.8 735.1,295.2 736.6,291.3 737.7,289.7 744.0,288.9 744.8,289.4 737.7,290.5 738.5,292.9 741.6,292.9 739.3,294.4 740.9,298.4 738.5,297.6 737.7,296.0 737.6,299.9"/>
<polygon points="748.7,287.9 750.3,288.9 749.5,290.5 748.8,292.1 748.4,289.7"/>
<polygon points="746.3,296.0 749.5,296.2 747.9,297.3"/>
<polygon points="753.9,292.6 759.3,292.7 761.2,296.5 764.4,293.7 769.8,295.4 769.8,305.6 766.7,303.8 765.1,304.5 764.4,302.3 765.9,301.5 760.4,298.4 758.1,297.6 755.7,295.7 757.3,295.2 754.6,293.7"/>
<polygon points="769.8,295.4 776.1,297.9 777.7,299.9 780.0,300.7 781.1,303.8 783.9,307.8 780.8,307.0 778.5,305.1 774.5,303.5 773.0,305.4 769.8,305.6"/>
<polygon points="781.6,299.9 784.7,299.6 787.1,297.9 786.3,300.4 782.4,301.0"/>
<polygon points="784.7,295.7 787.1,296.8 788.7,298.7 787.1,297.6"/>
<polygon points="792.6,301.0 793.4,302.3 791.8,301.5"/>
<polygon points="794.9,303.5 798.1,304.3 796.5,304.6"/>
<polygon points="799.6,305.4 801.7,306.5 800.4,307.0"/>
<polygon points="805.9,323.0 810.6,326.2 808.2,325.0"/>
<polygon points="826.6,318.7 828.6,319.2 827.8,319.8 826.7,319.5"/>
<polygon points="809.8,314.5 811.8,316.4 810.9,316.4"/>
<polygon points="737.7,262.2 740.5,262.3 740.7,264.7 739.8,267.0 740.5,269.0 743.5,270.6 743.2,271.7 740.9,270.6 739.3,269.4 737.7,268.6 736.6,265.9"/>
<polygon points="740.1,280.3 744.8,276.4 747.1,280.3 745.6,281.9 742.4,279.5"/>
<polygon points="739.8,272.7 742.0,273.3 740.9,274.8 739.9,274.7"/>
<polygon points="743.7,271.6 746.0,272.2 745.1,274.8 743.8,274.2"/>
<polygon points="732.6,278.1 736.3,274.1 736.3,275.2 733.8,278.1"/>
<polygon points="740.7,274.2 742.6,274.8 742.0,276.9 740.9,276.3"/>
<polygon points="742.4,273.6 743.4,275.3 742.9,276.3 742.3,275.3"/>
<polygon points="737.7,270.1 739.3,270.3 738.8,272.2 737.9,271.6"/>
<polygon points="737.3,255.3 738.5,251.7 740.1,252.1 738.2,256.8"/>
<polygon points="743.7,228.6 744.8,232.1 747.3,237.2 750.7,236.5 751.8,234.1 750.3,231.0 748.7,228.9 752.1,227.4 753.7,225.0 749.5,225.5"/>
<polygon points="747.1,232.2 747.3,237.2 750.7,236.5 751.8,234.1 750.3,231.0"/>
<polygon points="754.0,238.0 756.5,235.8 761.2,235.5 763.6,233.3 766.7,231.9 768.3,228.6 769.1,226.6 770.6,227.1 771.4,230.2 769.8,233.3 769.5,235.4 768.0,236.5 766.4,236.9 763.6,237.2 760.8,238.3 757.3,237.7"/>
<polygon points="751.8,238.8 755.4,238.5 754.6,242.1 752.9,242.4"/>
<polygon points="756.5,238.0 759.7,237.7 758.9,239.1"/>
<polygon points="768.3,226.3 769.1,223.4 771.1,220.2 776.9,223.4 773.5,225.5 769.8,225.8"/>
<polygon points="539.7,235.2 545.5,236.3 546.2,237.2 547.0,240.8 543.4,241.9 541.1,245.1 535.3,246.3 535.3,247.9 528.2,247.9 530.1,245.9 533.5,244.6 533.9,242.7 535.6,239.1 538.2,237.9"/>
<polygon points="535.3,247.9 535.3,250.6 530.1,254.5 528.5,257.9 522.1,258.7 523.0,253.7 526.2,250.2 528.2,247.9"/>
<polygon points="545.5,236.3 550.5,234.1 553.6,233.6 562.4,233.5 561.7,237.1 560.7,238.8 563.8,244.0 564.4,249.0 567.5,253.7 560.7,258.7 555.5,261.2 553.9,261.5 541.4,252.1 535.3,247.9 535.3,246.3 541.1,245.1 543.4,241.9 547.0,240.8 546.2,237.2"/>
<polygon points="562.4,233.5 564.9,233.0 566.1,233.6 565.0,237.2 566.9,239.3 564.6,241.5 563.8,244.0 560.7,238.8 561.7,237.1"/>
<polygon points="566.9,239.3 572.7,240.7 579.5,243.8 580.2,241.2 584.9,240.2 588.1,241.6 588.1,256.8 588.1,260.0 586.5,260.7 573.2,254.5 570.8,255.7 567.5,253.7 564.4,249.0 563.8,244.0 564.6,241.5"/>
<polygon points="588.1,241.6 594.3,242.9 597.5,241.8 602.5,242.3 603.6,245.1 602.6,247.7 601.9,249.1 604.5,253.7 606.7,256.8 588.1,256.8"/>
<polygon points="586.5,260.7 588.1,260.0 588.1,256.8 606.7,256.8 607.5,262.3 609.2,263.4 606.9,267.8 605.9,269.0 602.5,274.8 603.0,278.0 601.4,281.9 603.7,283.8 602.2,284.7 597.5,285.5 592.0,283.5 588.1,281.4 584.9,278.0 584.2,274.4 584.6,271.7 583.4,269.4 586.5,267.0"/>
<polygon points="529.8,268.3 530.1,271.7 532.0,272.5 535.6,274.1 535.9,274.8 540.3,275.3 541.4,272.5 545.0,268.6 549.2,268.0 550.9,267.3 554.5,267.0 555.5,265.0 555.5,261.2 553.9,261.5 541.4,252.1 538.7,252.3 540.3,265.6 531.2,267.2"/>
<polygon points="522.1,258.7 523.4,261.2 523.0,266.1 526.0,265.3 529.8,268.3 531.2,267.2 540.3,265.6 538.7,252.3 541.4,252.1 535.3,247.9 535.3,250.6 530.1,254.5 528.5,257.9"/>
<polygon points="521.5,268.3 523.0,266.1 526.0,265.3 529.8,268.3 530.1,271.7 527.4,271.6 522.7,271.9"/>
<polygon points="522.7,271.9 527.4,271.6 530.1,271.7 532.0,272.5 535.6,274.1 535.9,274.8 540.3,275.3 541.4,272.5 545.0,268.6 549.2,268.0 550.9,267.3 552.3,271.4 554.5,273.0 554.7,275.6 553.1,281.3 550.5,281.9 545.8,283.8 542.6,283.2 537.1,284.4 534.0,282.7 530.9,280.5 528.1,278.0 527.7,276.4 525.4,274.2"/>
<polygon points="525.4,274.2 527.4,271.6 532.0,272.5 535.6,274.1 535.9,274.8 533.2,278.0 528.1,278.0 527.7,276.4"/>
<polygon points="535.9,274.8 540.3,275.3 544.5,276.4 544.2,283.5 542.6,283.2 537.1,284.4 535.6,279.5"/>
<polygon points="550.9,267.3 554.5,267.0 555.5,265.0 555.5,261.2 560.7,258.7 567.5,253.7 570.8,255.7 573.2,254.5 572.7,260.0 574.0,264.7 573.2,266.2 570.2,269.4 568.2,270.6 562.2,270.9 559.1,270.1 555.2,270.1 554.5,273.0 552.3,271.4"/>
<polygon points="553.1,281.3 554.7,275.6 554.5,273.0 555.2,270.1 559.1,270.1 562.2,270.9 568.2,270.6 570.2,269.4 571.6,272.5 570.1,275.6 568.5,278.0 567.4,280.3 564.3,283.5 562.2,284.2 558.3,284.6 556.0,281.4"/>
<polygon points="573.2,254.5 586.5,260.7 586.5,267.0 583.4,269.4 584.6,271.7 584.2,274.4 582.6,276.4 578.7,277.2 573.2,279.5 571.6,278.8 572.4,275.6 571.6,272.5 570.2,269.4 573.2,266.2 574.0,264.7 572.7,260.0"/>
<polygon points="562.2,284.1 563.9,286.6 564.6,287.9 566.6,287.7 574.0,288.2 572.4,285.5 571.6,281.9 573.2,279.5 571.6,278.8 572.4,275.6 571.6,272.5 570.1,275.6 568.5,278.0 567.4,280.3 564.3,283.5"/>
<polygon points="571.6,281.9 572.4,285.5 574.8,285.8 577.9,284.7 584.2,284.6 588.1,283.2 592.0,283.5 588.1,281.4 584.9,278.0 582.6,276.4 578.7,277.2 573.2,279.5"/>
<polygon points="563.9,286.6 563.5,289.7 562.7,292.9 564.6,296.0 566.5,297.6 567.7,299.1 569.3,298.8 571.6,298.4 573.8,296.0 576.6,291.8 577.4,287.9 577.9,284.7 574.8,285.8 574.0,288.2 566.6,287.7 564.6,287.9"/>
<polygon points="567.7,299.1 568.2,300.7 569.3,300.4 574.0,300.7 576.3,303.8 579.5,303.8 583.1,302.7 583.4,306.2 585.7,308.5 587.3,308.9 588.9,309.3 592.0,310.1 595.6,312.5 595.1,310.1 593.6,305.4 596.7,304.1 594.7,298.4 594.7,295.2 595.3,293.5 595.9,289.7 597.9,287.7 596.7,285.3 592.0,283.5 588.1,283.2 584.2,284.6 577.9,284.7 577.4,287.9 576.6,291.8 573.8,296.0 571.6,298.4 569.3,298.8"/>
<polygon points="568.2,300.7 569.3,304.6 570.1,308.2 568.5,312.5 567.4,318.3 569.9,317.9 574.0,318.6 577.9,318.6 581.8,319.5 585.3,318.7 583.4,316.4 583.4,311.7 586.5,311.7 585.7,308.5 583.4,306.2 583.1,302.7 579.5,303.8 576.3,303.8 574.0,300.7 569.3,300.4"/>
<polygon points="567.4,318.3 569.9,317.9 574.0,318.6 577.9,318.6 581.8,319.5 585.3,318.7 588.1,319.2 587.3,319.5 581.8,320.0 581.8,325.8 580.2,325.8 580.2,335.8 575.5,336.4 574.8,336.1 572.9,333.6 571.6,327.3 569.3,323.4"/>
<polygon points="574.8,336.1 575.5,336.4 580.2,335.8 580.2,330.2 584.9,330.9 588.9,331.6 591.2,328.9 595.1,326.1 598.3,326.6 599.0,332.8 600.5,333.3 599.8,336.0 597.5,338.3 593.6,341.9 589.6,344.3 583.4,344.9 580.2,345.8 577.9,344.9 577.1,342.2"/>
<polygon points="591.2,337.5 594.8,336.7 595.1,338.6 592.8,339.3"/>
<polygon points="580.2,325.8 581.8,325.8 581.8,320.0 587.3,319.5 588.9,319.2 591.2,322.6 595.1,326.1 591.2,328.9 588.9,331.6 584.9,330.9 580.2,330.2"/>
<polygon points="588.9,319.2 592.0,317.2 595.9,315.7 598.3,316.4 600.5,317.5 600.6,321.9 599.0,325.5 598.3,326.6 595.1,326.1 591.2,322.6"/>
<polygon points="583.4,311.7 583.4,316.4 585.3,318.7 588.1,319.2 592.0,317.2 595.9,315.7 596.4,314.0 601.1,313.2 600.3,310.1 601.4,307.8 597.5,304.9 593.6,305.4 595.1,310.1 595.6,312.5 592.0,310.1 588.9,309.3 587.3,308.9 585.7,308.5 586.5,311.7"/>
<polygon points="612.4,307.6 612.4,314.8 607.7,318.7 603.7,322.6 604.5,325.8 604.5,328.9 600.5,332.4 600.5,333.3 599.0,332.8 598.3,326.6 599.0,325.5 600.6,321.9 600.5,317.5 598.3,316.4 596.4,315.7 596.4,314.0 601.1,313.2 603.7,314.0 604.2,317.9 605.0,316.4 603.7,309.3 607.7,309.3"/>
<polygon points="601.1,313.2 603.0,306.2 603.7,309.3 605.0,316.4 604.2,317.9 603.7,314.0"/>
<polygon points="596.7,304.1 597.5,304.9 601.4,307.8 603.0,306.2 603.7,309.3 607.7,309.3 612.4,307.6 610.5,303.8 609.7,301.5 610.3,298.7 608.0,296.8 602.2,292.9 597.2,292.9 595.3,293.5 594.7,295.2 594.7,298.4"/>
<polygon points="602.2,292.9 608.0,296.8 610.3,298.7 611.6,296.0 614.1,294.0 613.1,286.9 614.7,285.0 611.6,284.7 609.2,285.8 605.2,284.1 603.7,283.8 602.2,284.7 603.0,289.7"/>
<polygon points="595.3,293.5 597.2,292.9 602.2,292.9 603.0,289.7 602.2,284.7 597.5,285.5 597.9,287.7 595.9,289.7"/>
<polygon points="601.4,281.9 603.7,283.8 605.2,284.1 609.2,285.8 611.6,284.7 614.7,285.0 617.1,283.6 619.4,283.5 624.1,278.8 616.8,276.4 616.0,274.1 614.2,272.8 611.9,268.6 605.9,269.0 602.5,274.8 603.0,278.0"/>
<polygon points="605.9,269.0 606.9,267.8 609.2,263.4 610.8,267.0 614.2,270.1 616.6,271.9 614.2,272.8 611.9,268.6"/>
<polygon points="613.1,294.0 614.1,294.0 617.1,290.5 621.0,287.4 624.1,284.2 626.5,281.1 628.8,274.8 629.3,272.8 625.4,273.7 617.8,274.8 616.6,273.3 616.0,274.1 616.8,276.4 624.1,278.8 619.4,283.5 617.1,283.6 614.7,285.0 613.1,286.9"/>
<polygon points="626.2,310.1 628.0,315.6 626.9,317.9 624.1,325.8 622.5,330.5 619.4,331.3 617.1,325.0 617.8,322.6 618.2,317.9 621.8,316.1 624.1,312.9"/>
<polygon points="727.5,325.8 731.8,323.6 738.5,321.9 740.5,318.7 742.4,317.2 744.8,314.8 747.1,313.2 749.5,314.8 751.8,314.6 752.9,311.7 756.5,309.5 760.4,310.4 763.1,310.3 762.0,312.5 761.2,314.8 764.4,316.8 767.2,318.6 769.5,318.6 770.6,314.8 770.8,310.9 772.2,308.1 773.8,311.4 774.2,314.0 776.6,314.8 777.7,319.8 782.1,323.3 784.3,326.6 789.0,331.3 789.6,336.1 788.7,339.9 787.9,342.2 784.3,347.6 783.9,350.1 778.2,352.4 774.5,351.2 770.6,351.3 768.0,349.7 767.5,347.2 765.1,347.1 764.7,343.0 762.0,345.8 760.4,343.8 757.3,341.4 754.2,340.7 749.5,341.4 744.8,342.7 742.4,344.6 736.2,345.0 733.0,346.3 729.1,344.9 730.2,340.7 728.9,336.7 726.4,332.2 727.2,327.3"/>
<polygon points="775.5,355.1 781.3,355.4 780.8,359.0 778.9,359.6 776.4,357.6"/>
<polygon points="819.5,345.2 822.0,346.9 824.4,349.0 828.6,350.4 827.0,352.7 825.5,354.8 823.1,356.5 822.7,353.8 821.2,352.7 822.3,350.5"/>
<polygon points="819.4,354.8 821.9,356.2 820.5,358.7 817.2,360.9 816.1,363.4 812.9,364.3 809.8,363.1 812.9,360.2 816.5,358.4 818.4,355.5"/>
<polygon points="267.0,317.2 267.6,316.5 268.3,317.2 267.6,317.8"/>
<polygon points="827.2,318.7 827.8,318.1 828.5,318.7 827.8,319.4"/>
<polygon points="278.0,312.8 278.6,312.2 279.2,312.8 278.6,313.3"/>
<polygon points="273.5,324.2 273.9,323.8 274.3,324.2 273.9,324.6"/>
<polygon points="311.1,317.5 311.5,317.0 311.9,317.5 311.5,317.9"/>
<polygon points="314.2,318.9 314.6,318.5 315.1,318.9 314.6,319.3"/>
<polygon points="329.1,305.4 329.5,305.0 329.9,305.4 329.5,305.8"/>
<polygon points="405.7,292.1 406.3,291.5 406.9,292.1 406.3,292.6"/>
<polygon points="635.5,298.5 635.9,298.2 636.2,298.5 635.9,298.9"/>
<polygon points="638.7,323.1 639.2,322.6 639.7,323.1 639.2,323.6"/>
<polygon points="635.4,324.4 635.9,323.9 636.3,324.4 635.9,324.8"/>
<polygon points="819.6,288.2 820.0,287.7 820.4,288.2 820.0,288.6"/>
<polygon points="823.5,293.5 823.9,293.1 824.3,293.5 823.9,293.9"/>
<polygon points="537.5,194.1 537.9,193.7 538.4,194.1 537.9,194.6"/>
<polygon points="523.3,247.1 523.8,246.5 524.4,247.1 523.8,247.7"/>
<polygon points="526.5,246.6 527.0,246.2 527.4,246.6 527.0,247.1"/>
<polygon points="510.8,266.2 511.3,265.7 511.8,266.2 511.3,266.7"/>
<polygon points="511.7,267.8 512.1,267.4 512.5,267.8 512.1,268.2"/>
<polygon points="504.6,231.0 505.0,230.5 505.4,231.0 505.0,231.4"/>
<polygon points="447.0,240.7 447.4,240.3 447.7,240.7 447.4,241.0"/>
<polygon points="662.9,286.6 663.3,286.2 663.6,286.6 663.3,287.0"/>
<polygon points="453.0,267.8 453.3,267.4 453.7,267.8 453.3,268.1"/>
<polygon points="452.2,270.9 452.5,270.6 452.9,270.9 452.5,271.3"/>
<polygon points="445.1,262.6 445.5,262.3 445.8,262.6 445.5,263.0"/>
<polygon points="623.0,309.3 623.3,309.0 623.7,309.3 623.3,309.7"/>
<polygon points="617.4,310.1 617.8,309.7 618.3,310.1 617.8,310.5"/>
<polygon points="809.9,292.1 810.3,291.7 810.6,292.1 810.3,292.4"/>
<polygon points="816.4,280.3 816.9,279.9 817.3,280.3 816.9,280.8"/>
<polygon points="796.1,280.6 796.5,280.3 796.8,280.6 796.5,281.0"/>
<polygon points="765.0,276.4 765.3,276.1 765.7,276.4 765.3,276.8"/>
<polygon points="775.4,270.3 775.8,269.9 776.2,270.3 775.8,270.7"/>
<polygon points="539.8,316.2 540.1,315.9 540.5,316.2 540.1,316.6"/>
<polygon points="526.0,303.8 526.3,303.5 526.7,303.8 526.3,304.2"/>
<polygon points="559.4,290.8 559.9,290.4 560.3,290.8 559.9,291.3"/>
<polygon points="562.1,285.8 562.5,285.4 563.0,285.8 562.5,286.2"/>
</g>
<g stroke="#e39c10" stroke-width="0.95" stroke-linejoin="round">
<polygon fill="#276b2a" points="328.0,182.2 335.8,183.3 339.7,182.4 346.8,181.6 353.0,182.6 360.9,183.2 368.7,184.7 379.7,184.0 385.9,184.7 395.3,185.1 400.0,184.0 402.4,182.4 407.9,183.2 412.6,185.5 414.9,181.9 422.0,184.0 420.4,187.1 414.1,187.1 411.0,190.7 407.1,191.8 402.4,194.9 400.7,198.4 403.2,199.3 407.9,202.0 412.6,203.9 415.7,204.6 420.1,205.0 419.9,208.2 422.8,210.6 425.1,210.6 425.1,205.9 427.5,204.3 429.0,201.2 426.7,199.2 427.5,196.5 425.9,193.7 431.4,193.7 436.1,194.9 439.2,195.7 440.0,198.8 442.3,199.6 445.5,198.1 447.8,196.8 451.0,200.4 453.3,202.8 455.7,204.3 458.8,205.9 461.6,209.3 459.1,210.6 454.9,212.6 444.7,212.6 447.8,214.5 447.0,215.6 447.4,217.5 453.3,220.0 454.9,219.2 453.3,220.5 449.4,221.6 445.8,222.8 445.2,221.1 443.9,221.1 442.7,217.7 440.5,217.0 436.9,220.8 431.7,220.8 429.0,222.0 424.8,223.1 419.6,225.5 418.7,225.0 419.8,223.9 417.9,219.5 416.0,218.4 410.5,215.6 408.5,216.1 399.7,214.5 355.7,214.5 353.0,213.0 349.1,211.7 348.3,209.8 344.4,205.9 338.9,201.2 334.2,198.8 328.0,197.0"/>
<polygon fill="#1a531b" points="353.5,215.5 354.9,218.9 353.8,224.2 354.3,228.0 356.9,232.1 359.3,235.7 359.9,237.2 363.4,238.0 365.4,240.4 369.2,240.1 375.0,242.3 379.4,242.3 382.0,241.5 385.1,244.9 387.5,245.9 390.0,244.6 393.0,248.2 396.6,250.7 396.3,247.7 400.3,245.2 401.9,244.8 405.5,245.1 408.5,245.5 408.8,244.0 411.0,243.7 414.9,244.3 417.3,244.1 419.3,247.4 420.7,250.4 422.1,251.8 423.4,250.6 422.6,246.6 421.3,243.5 421.8,241.3 424.8,239.3 426.8,238.0 430.6,236.1 429.3,233.3 431.1,231.3 432.9,227.8 436.1,226.9 439.2,226.0 438.3,224.5 438.9,222.8 443.9,221.1 442.7,217.7 440.5,217.0 436.9,220.8 431.7,220.8 429.0,222.0 424.8,223.1 419.6,225.5 418.7,225.0 419.8,223.9 417.9,219.5 416.0,218.4 410.5,215.6 408.5,216.1 399.7,214.5 355.7,214.5"/>
<polygon fill="#1a531b" points="328.0,182.2 324.0,181.5 317.0,181.1 310.7,180.4 303.4,179.6 298.2,180.8 293.0,182.4 288.5,183.3 292.7,185.8 294.3,186.9 290.3,187.4 285.6,188.5 291.1,190.2 296.6,190.2 290.3,192.6 291.0,193.5 288.8,194.9 291.1,196.5 294.3,197.3 295.0,199.5 302.1,199.0 300.5,202.8 293.5,205.3 290.3,205.9 299.0,203.9 306.0,201.2 308.4,198.5 311.0,197.9 313.9,195.7 318.6,196.0 323.3,197.1 328.0,197.0"/>
<polygon fill="#276b2a" points="350.0,174.4 356.8,172.7 364.8,174.4 372.7,176.1 380.7,177.3 386.4,180.1 384.1,184.1 378.4,185.2 370.5,183.0 363.6,180.7 356.8,179.3 350.0,179.0"/>
<polygon fill="#276b2a" points="354.5,171.0 361.4,169.5 368.2,170.5 377.3,170.8 382.4,172.2 378.4,174.1 370.5,173.4 361.4,173.0 354.5,172.3"/>
<polygon fill="#276b2a" points="383.0,167.0 388.6,166.2 395.5,167.6 398.9,168.8 404.5,170.5 413.6,171.4 420.5,172.7 422.7,174.4 415.9,175.6 411.9,177.8 409.1,181.8 403.4,180.9 397.7,179.3 390.9,178.6 387.5,176.7 389.8,174.1 386.4,171.8 383.0,169.5"/>
<polygon fill="#276b2a" points="396.6,164.8 403.4,162.5 413.6,161.1 423.9,160.5 436.4,160.5 446.6,161.1 450.0,162.5 443.2,165.9 436.4,167.0 429.5,168.8 422.7,170.1 413.6,169.5 406.8,168.4 400.0,167.3"/>
<polygon fill="#276b2a" points="406.8,176.1 413.6,176.5 420.5,177.3 429.5,179.3 436.4,181.2 443.2,183.9 449.4,186.6 447.7,191.1 440.9,192.3 434.1,191.1 428.4,188.9 422.7,187.7 418.2,185.5 414.8,183.2 411.4,180.9 408.0,178.6"/>
<polygon fill="#276b2a" points="400.0,184.1 406.8,186.1 411.9,188.6 409.1,191.1 403.4,190.0 400.0,187.7"/>
<polygon fill="#276b2a" points="456.0,216.7 461.9,210.4 461.6,213.3 465.1,214.0 466.3,216.9 464.8,218.1 461.3,217.7 457.2,216.7"/>
<polygon fill="#276b2a" points="355.4,215.5 352.2,213.7 347.9,211.9 353.0,212.5"/>
<polygon fill="#dcecdb" points="434.5,168.3 445.5,165.6 453.3,163.1 467.4,162.5 481.5,160.8 498.8,160.3 517.6,161.6 530.1,163.4 519.1,165.9 518.3,170.6 514.4,173.8 513.6,177.7 509.7,181.6 498.8,184.3 490.9,188.2 486.2,190.2 483.1,194.9 480.1,197.6 473.7,196.0 470.5,191.8 467.4,188.7 465.1,185.5 469.0,182.4 463.5,180.8 462.7,177.7 459.6,174.6 451.7,172.2 442.3,171.9 436.9,169.9"/>
<polygon fill="#c7e3c6" points="511.3,188.7 514.4,187.3 520.7,187.6 526.2,187.4 527.6,189.3 525.4,190.5 519.6,192.0 513.6,191.2 514.7,190.1"/>
<polygon fill="#96cc94" points="365.4,240.4 369.2,240.1 375.0,242.3 379.4,242.3 382.0,241.5 385.1,244.9 387.5,245.9 390.0,244.6 393.0,248.2 396.6,250.7 395.8,256.8 396.6,260.0 398.5,261.8 400.8,262.8 404.7,262.2 407.1,260.1 407.4,258.4 412.6,257.6 411.8,262.3 410.5,262.3 409.1,263.4 406.3,264.2 407.1,266.2 404.4,268.6 401.6,266.2 397.7,266.7 393.8,265.3 389.5,263.4 386.7,262.6 383.4,259.3 383.9,257.1 382.0,254.5 378.9,251.7 377.5,249.8 375.0,247.6 373.1,245.9 371.5,242.4 369.0,241.9 369.9,245.1 372.1,247.7 374.0,250.6 376.5,253.4 377.3,255.1 376.1,254.5 373.4,252.4 372.9,249.8 369.5,247.4 367.4,244.3"/>
<polygon fill="#e1f0e0" points="404.4,268.6 406.3,264.2 409.1,263.4 410.5,262.3 410.7,266.2 414.1,266.2 418.4,267.8 418.1,272.5 417.7,274.2 420.4,276.9 424.3,276.4 427.6,277.7 426.4,279.5 422.8,279.9 421.2,278.8 417.9,278.0 414.6,275.6 413.4,272.5 411.6,270.9 408.7,270.1 405.5,269.4"/>
<polygon fill="#96cc94" points="404.4,268.6 406.3,264.2 409.1,263.4 409.6,266.4 409.1,268.6 407.6,269.7"/>
<polygon fill="#e1f0e0" points="415.9,257.0 420.4,255.1 425.1,256.0 428.2,258.1 432.6,259.6 427.5,260.1 425.9,257.6 421.2,256.7"/>
<polygon fill="#e1f0e0" points="432.3,260.3 436.1,260.1 440.0,260.7 441.7,262.3 437.6,263.1 432.3,262.6"/>
<polygon fill="#e1f0e0" points="426.2,262.5 429.3,262.6 428.2,263.4"/>
<polygon fill="#e1f0e0" points="443.6,262.3 446.1,262.5 445.5,263.1"/>
<polygon fill="#e1f0e0" points="426.7,249.3 428.2,249.8 427.5,252.1"/>
<polygon fill="#e1f0e0" points="429.8,252.9 430.6,253.7 429.8,254.5"/>
<polygon fill="#e1f0e0" points="304.6,260.0 306.0,260.3 305.2,261.5"/>
<polygon fill="#e1f0e0" points="300.8,257.5 301.8,257.9 301.3,258.1"/>
<polygon fill="#e1f0e0" points="298.2,256.5 299.3,256.8 299.0,257.1"/>
<polygon fill="#5aa85b" points="468.0,284.7 470.5,288.5 472.1,292.1 478.4,293.7 483.1,295.7 487.0,296.0 490.9,298.8 493.7,299.9 494.4,302.6 493.7,305.4 490.9,308.5 487.9,312.5 487.8,318.7 486.7,321.9 484.7,325.8 480.7,327.3 476.8,328.6 472.9,331.7 472.7,335.6 469.8,339.1 466.6,343.0 465.2,344.3 465.1,342.2 461.8,339.7 458.6,338.6 461.3,335.5 464.4,331.4 463.3,331.3 462.7,328.9 461.9,326.1 458.3,325.9 458.0,322.6 457.7,317.9 454.6,316.7 454.1,312.9 451.0,312.5 447.0,310.1 446.4,306.7 440.0,308.4 438.4,308.5 435.4,307.0 434.5,305.4 432.9,303.1 434.5,299.1 439.2,297.9 440.0,292.9 439.2,290.5 443.1,288.0 447.8,285.0 451.0,285.0 454.9,283.2 455.0,288.9 460.4,288.3 463.5,287.7"/>
<polygon fill="#96cc94" points="464.4,331.4 461.3,335.5 458.6,338.6 457.7,342.2 457.2,344.7 458.8,348.5 458.5,351.2 451.7,352.4 451.3,355.2 447.0,355.5 447.8,357.9 446.7,361.8 443.1,364.2 445.8,366.5 441.6,370.1 440.8,372.8 441.7,373.4 436.2,372.8 435.3,368.1 436.9,360.2 436.1,355.5 437.6,349.3 439.2,343.0 439.5,338.3 441.6,333.6 443.9,327.3 447.0,325.8 451.0,326.1 453.3,328.1 458.0,330.5 463.3,331.3"/>
<polygon fill="#96cc94" points="440.0,318.7 438.7,320.0 438.9,325.0 438.4,331.3 436.9,336.0 436.9,342.2 435.3,346.1 433.7,350.8 433.7,356.3 432.9,360.2 430.6,364.9 430.6,369.6 432.2,373.6 436.1,376.7 439.2,377.8 441.7,373.4 436.2,372.8 435.3,368.1 436.9,360.2 436.1,355.5 437.6,349.3 439.2,343.0 439.5,338.3 441.6,333.6 443.9,327.3 442.0,324.7 441.1,321.1"/>
<polygon fill="#96cc94" points="441.6,373.7 446.6,377.3 441.6,378.0 437.6,376.7 440.0,374.7"/>
<polygon fill="#c7e3c6" points="423.1,296.8 421.5,299.1 424.3,303.1 427.5,309.3 429.0,312.5 431.4,315.6 436.9,318.4 438.7,320.0 440.0,318.7 440.8,314.8 441.1,310.9 438.4,308.5 435.4,307.0 434.5,305.4 432.9,303.1 434.5,299.1 439.2,297.9 435.3,295.1 430.9,291.6 427.5,296.0 425.9,298.4"/>
<polygon fill="#c7e3c6" points="423.1,296.8 425.9,298.4 427.5,296.0 430.9,291.6 427.5,290.0 425.4,289.1 423.5,290.5 422.3,293.7"/>
<polygon fill="#96cc94" points="427.6,277.7 429.8,276.4 430.6,274.8 432.9,273.7 435.3,272.8 437.2,271.9 435.4,274.1 435.3,278.0 437.6,280.3 442.3,281.6 443.1,288.0 439.2,290.5 440.0,292.9 439.2,297.9 435.3,295.1 430.9,291.6 427.5,290.0 425.4,289.1 427.5,285.0 427.6,281.1 426.8,279.9"/>
<polygon fill="#c7e3c6" points="437.2,271.9 436.4,274.1 439.2,273.3 442.3,274.8 445.5,274.7 448.6,274.7 451.7,274.5 453.3,275.6 454.9,278.0 453.8,283.2 451.0,285.0 447.8,285.0 443.1,288.0 442.3,281.6 437.6,280.3 435.3,278.0 435.4,274.1"/>
<polygon fill="#f2f8f1" points="454.9,278.0 457.2,280.3 459.6,281.9 462.7,282.1 465.8,282.7 468.0,284.7 463.5,287.7 460.4,288.3 455.0,288.9 454.9,283.2 453.8,283.2"/>
<polygon fill="#c7e3c6" points="440.0,318.7 441.1,321.1 442.0,324.7 443.9,327.3 447.0,325.8 451.0,326.1 453.3,322.6 458.0,322.6 457.7,317.9 454.6,316.7 454.1,312.9 451.0,312.5 447.0,310.1 446.4,306.7 440.0,308.4 441.1,310.9 440.8,314.8"/>
<polygon fill="#f2f8f1" points="458.0,322.6 458.3,325.9 461.9,326.1 462.7,328.9 463.3,331.3 458.0,334.1 458.0,330.5 453.3,328.1 451.0,326.1 453.3,322.6"/>
<polygon fill="#c7e3c6" points="465.2,344.3 462.9,346.0 458.8,345.4 457.7,342.2 458.6,338.6 461.8,339.7 465.1,342.2"/>
<polygon fill="#5aa85b" points="597.2,181.9 600.6,182.7 605.3,183.0 611.6,185.1 613.5,187.1 608.4,187.6 604.5,190.2 607.7,191.3 611.6,190.1 616.3,187.6 617.8,184.3 621.8,184.6 632.0,184.0 639.8,183.5 646.1,181.9 653.1,180.8 656.2,184.1 657.0,177.2 662.5,177.2 665.6,183.5 668.8,179.7 673.5,178.0 675.8,176.1 684.4,174.6 685.2,173.5 697.8,172.1 705.6,171.4 712.7,169.5 716.6,171.0 724.4,171.7 726.8,176.1 734.6,176.1 743.2,176.1 751.0,177.7 755.7,179.3 766.7,178.5 769.8,177.2 777.7,178.0 783.9,179.3 799.6,180.8 807.5,182.4 815.3,181.6 824.7,181.9 831.0,183.3 831.0,189.4 826.3,190.2 828.6,193.4 820.0,194.9 815.3,197.3 805.9,197.6 804.3,200.7 802.8,203.5 799.6,206.7 794.4,211.4 793.4,207.5 792.6,202.0 796.5,200.4 799.6,194.9 791.8,198.1 787.1,198.5 780.8,198.2 773.0,198.4 769.1,200.7 763.6,206.1 769.1,207.5 769.8,211.4 768.3,215.3 765.1,218.4 760.4,223.1 755.4,223.9 753.7,225.0 754.2,220.9 757.3,220.8 760.1,215.6 753.4,216.1 748.7,213.4 745.6,208.2 738.5,207.8 736.9,210.6 733.5,213.7 731.5,213.3 727.5,212.6 718.1,214.0 711.9,212.5 702.5,209.8 701.7,213.3 693.1,211.9 686.5,214.2 683.7,213.7 679.0,211.4 674.3,211.7 669.6,207.5 664.1,206.7 658.6,204.8 650.8,205.7 644.5,206.7 644.5,209.0 639.8,211.4 635.1,212.0 628.8,210.6 624.9,213.0 622.9,214.2 621.8,215.3 622.5,217.7 624.9,219.2 623.3,220.0 622.5,221.6 623.3,223.9 624.1,225.5 621.8,225.8 617.1,224.7 611.6,223.3 608.4,221.6 607.7,220.3 610.0,217.7 608.8,217.5 611.1,216.4 611.6,213.7 608.4,213.1 604.5,212.3 602.8,210.3 600.1,209.5 600.1,207.8 598.3,206.7 597.3,204.2 593.1,203.2 592.0,201.2 592.8,198.2 594.3,197.0 592.6,196.5 595.1,194.9 598.3,192.9 595.9,191.0 595.9,188.7 594.3,186.6 595.9,185.2 594.0,184.0 593.6,183.2"/>
<polygon fill="#5aa85b" points="581.8,204.6 584.6,206.1 579.6,206.1 580.2,205.1"/>
<polygon fill="#5aa85b" points="630.4,179.3 635.1,176.1 638.2,173.8 644.5,171.9 655.5,170.6 652.3,172.5 641.4,175.0 638.2,177.7 635.1,180.7"/>
<polygon fill="#5aa85b" points="699.3,167.5 705.6,164.4 713.4,166.7 710.3,168.3"/>
<polygon fill="#5aa85b" points="766.7,173.8 773.0,172.5 783.9,173.8 771.4,175.7"/>
<polygon fill="#5aa85b" points="828.6,179.3 831.0,179.1 831.0,180.2"/>
<polygon fill="#5aa85b" points="771.4,219.2 773.8,213.7 773.0,206.7 772.2,206.2 771.4,211.4 771.1,216.1"/>
<polygon fill="#5aa85b" points="266.8,184.0 276.2,186.3 280.9,187.1 283.0,187.9 278.6,190.2 270.0,188.7 266.8,189.4"/>
<polygon fill="#5aa85b" points="535.0,225.5 535.1,228.6 534.0,230.5 535.1,233.3 537.3,233.0 537.1,231.0 537.9,229.2 538.1,225.6 536.1,225.3"/>
<polygon fill="#3b8a3c" points="535.0,225.5 534.3,223.6 536.4,222.8 541.1,223.1 546.1,223.3 550.0,224.2 553.9,224.9 553.9,225.6 550.2,227.1 548.9,229.4 547.6,232.4 545.6,233.8 542.0,233.8 540.1,234.9 538.9,233.6 537.3,233.0 537.1,231.0 537.9,229.2 538.1,225.6 536.1,225.3"/>
<polygon fill="#3b8a3c" points="546.1,223.3 547.0,221.4 547.0,218.9 545.5,217.5 541.5,216.2 541.8,215.1 544.2,214.8 546.4,215.1 546.7,213.4 549.2,213.7 551.4,211.5 552.8,211.2 555.5,213.1 558.0,213.7 561.7,214.5 560.8,216.7 558.5,218.9 559.9,220.0 560.7,222.7 558.3,223.8 556.0,223.3 553.9,224.9 550.0,224.2"/>
<polygon fill="#5aa85b" points="552.8,211.2 554.2,210.8 555.6,209.5 556.4,208.2 559.7,207.6 559.9,209.5 558.3,211.7 558.9,213.7 558.0,213.7 555.5,213.1"/>
<polygon fill="#276b2a" points="559.7,207.6 562.2,207.3 562.4,205.3 564.4,205.4 566.1,206.7 569.3,205.9 571.2,206.8 571.8,208.9 572.4,211.2 568.0,212.5 570.5,214.8 569.3,216.9 564.6,216.9 560.8,216.7 561.7,214.5 558.9,213.7 558.3,211.7 559.9,209.5"/>
<polygon fill="#5aa85b" points="562.4,205.3 561.6,202.8 565.4,200.9 566.0,202.8 565.2,205.1 564.4,205.4"/>
<polygon fill="#5aa85b" points="566.1,204.0 568.6,203.5 568.2,205.1"/>
<polygon fill="#5aa85b" points="558.5,218.9 560.8,216.7 564.6,216.9 565.4,218.4 563.0,219.2 559.9,219.4"/>
<polygon fill="#5aa85b" points="564.6,216.9 569.3,216.9 570.5,214.8 572.4,214.5 575.5,215.3 574.8,216.9 574.0,218.1 570.4,218.4 565.4,218.4"/>
<polygon fill="#3b8a3c" points="559.9,219.4 560.7,222.7 562.7,221.7 565.4,223.1 566.1,224.7 568.5,226.3 570.8,227.4 573.5,228.6 573.3,231.8 574.1,231.8 575.9,229.6 574.8,227.5 577.9,228.3 575.5,227.1 574.0,225.6 570.8,224.2 568.5,221.6 568.2,220.0 570.4,219.7 570.4,218.4 565.4,218.4 563.0,219.2"/>
<polygon fill="#3b8a3c" points="568.3,231.6 573.3,231.3 572.6,233.8"/>
<polygon fill="#3b8a3c" points="561.7,226.9 564.3,227.1 563.9,230.2 562.1,230.2"/>
<polygon fill="#276b2a" points="540.0,212.8 544.2,211.9 551.1,211.1 551.6,208.7 549.2,207.5 546.9,205.7 545.8,203.7 543.9,203.4 546.1,201.0 542.6,201.0 544.2,199.5 541.1,199.5 539.2,202.0 540.1,204.6 541.2,205.3 543.7,205.4 544.2,207.6 541.7,207.8 542.3,209.3 540.6,210.3 543.9,210.8"/>
<polygon fill="#5aa85b" points="545.8,203.7 543.9,203.4 546.1,201.0 542.6,201.0 544.2,199.5 541.1,199.5 539.2,202.0 540.1,204.6 541.2,205.3 543.7,205.4 545.0,204.3"/>
<polygon fill="#5aa85b" points="539.5,209.5 539.5,206.8 540.1,205.3 537.5,204.6 535.6,205.7 533.2,206.4 534.0,208.2 532.9,210.4 535.6,210.4"/>
<polygon fill="#5aa85b" points="557.5,198.8 559.9,200.4 565.4,198.5 566.9,198.8 568.0,196.5 568.5,194.9 567.7,191.8 570.8,190.2 571.6,187.9 574.0,184.7 578.7,183.2 581.8,183.0 586.5,183.8 589.6,181.8 593.6,183.2 597.5,181.1 592.8,179.9 586.5,180.0 578.7,181.6 572.4,184.0 569.3,186.3 566.1,190.2 561.4,192.3 556.7,194.1 556.7,197.3"/>
<polygon fill="#5aa85b" points="566.1,199.0 568.6,203.2 570.8,204.5 574.0,202.8 575.1,200.6 577.9,198.4 575.9,195.7 576.3,193.4 579.5,191.8 582.6,190.2 584.6,188.2 586.5,188.2 585.7,185.5 581.8,183.0 578.7,183.2 574.0,184.7 571.6,187.9 570.8,190.2 567.7,191.8 568.5,194.9 568.0,196.5 566.9,198.8"/>
<polygon fill="#5aa85b" points="581.8,196.5 584.9,197.4 589.6,196.7 592.6,196.5 595.1,194.9 598.3,192.9 595.9,191.0 595.9,188.7 594.3,186.6 595.9,185.2 594.0,184.0 593.6,183.2 589.6,181.8 586.5,183.8 581.8,183.0 585.7,185.5 586.5,188.2 588.5,189.4 583.4,191.8 582.1,194.1"/>
<polygon fill="#c7e3c6" points="582.0,202.3 582.1,204.6 584.6,206.1 588.9,206.2 590.9,204.0 593.1,203.2 592.0,201.2 592.8,198.2 585.7,198.5 586.5,201.2 583.4,201.0"/>
<polygon fill="#5aa85b" points="571.2,206.8 574.8,205.9 578.0,205.6 579.6,206.1 584.6,206.1 585.7,207.5 585.7,209.8 586.5,212.2 584.3,214.4 578.7,213.7 575.5,212.3 572.4,211.2 571.8,208.9"/>
<polygon fill="#5aa85b" points="568.0,212.5 572.4,211.2 575.5,212.3 578.4,213.7 575.5,215.3 572.4,214.5 570.5,214.8"/>
<polygon fill="#96cc94" points="575.5,215.3 578.4,213.7 584.3,214.4 583.7,215.5 578.7,216.1"/>
<polygon fill="#96cc94" points="574.0,218.1 574.8,216.9 575.5,215.3 578.7,216.1 583.7,215.5 584.5,216.2 581.8,218.9 578.4,219.4 574.8,218.4"/>
<polygon fill="#96cc94" points="570.4,219.7 570.2,220.5 573.2,222.7 576.3,223.9 579.1,225.5 579.5,227.8 580.2,229.1 581.8,227.4 584.9,226.6 584.2,224.7 584.9,222.4 584.5,221.6 581.8,218.9 578.4,219.4 574.8,218.4 570.4,218.4"/>
<polygon fill="#c7e3c6" points="581.8,218.9 584.5,216.2 587.3,216.2 590.6,215.8 593.1,218.4 593.7,220.3 595.3,220.8 593.7,222.7 591.2,222.2 588.5,223.0 584.5,221.6"/>
<polygon fill="#f2f8f1" points="590.6,215.8 592.0,215.3 594.7,216.9 595.9,218.4 593.1,218.4"/>
<polygon fill="#96cc94" points="584.5,221.6 584.9,222.4 584.2,224.7 584.9,226.6 589.8,226.6 592.8,225.5 592.6,223.6 593.7,222.7 591.2,222.2 588.5,223.0"/>
<polygon fill="#96cc94" points="580.2,229.1 581.8,227.4 584.9,226.6 589.8,226.6 590.1,227.2 586.5,227.8 585.4,229.4 584.9,231.4 584.2,233.3 582.9,233.6 582.0,232.1 581.8,231.0"/>
<polygon fill="#c7e3c6" points="585.7,207.5 588.9,206.2 590.9,204.0 593.1,203.2 597.3,204.2 598.3,206.7 600.1,207.8 597.5,209.8 596.7,210.8 591.2,210.4 586.5,210.4 585.7,209.8"/>
<polygon fill="#c7e3c6" points="586.5,210.4 591.2,210.4 596.7,210.8 600.1,209.5 602.8,210.3 604.5,212.3 608.4,213.1 611.6,213.7 611.1,216.4 608.8,217.5 605.3,218.1 603.7,219.7 606.1,220.3 601.4,221.6 599.8,220.2 601.4,219.2 597.5,218.3 595.9,219.5 595.3,220.8 593.7,220.3 593.1,218.4 595.9,218.4 594.7,216.9 592.0,215.3 590.6,215.8 587.3,216.2 584.5,216.2 584.3,214.4 586.5,212.2"/>
<polygon fill="#5aa85b" points="589.8,226.6 592.8,225.5 594.3,226.7 597.5,226.9 601.4,225.5 603.7,225.5 608.8,227.2 613.9,226.3 617.1,226.9 619.1,229.1 618.2,232.9 615.3,233.2 611.6,233.5 606.4,233.6 605.3,235.0 604.5,233.9 602.2,234.6 599.8,234.7 596.7,234.1 593.6,233.8 591.8,232.5 590.1,230.7 590.4,228.6"/>
<polygon fill="#c7e3c6" points="599.5,236.3 603.1,235.4 602.2,237.1"/>
<polygon fill="#c7e3c6" points="611.6,223.3 617.1,224.7 621.8,225.8 624.1,225.5 626.5,227.8 625.7,231.0 624.1,229.9 619.1,229.1 617.1,226.9 613.9,226.3"/>
<polygon fill="#c7e3c6" points="622.9,214.2 624.9,213.0 628.8,210.6 635.1,212.0 639.8,211.4 644.5,209.0 644.5,206.7 650.8,205.7 658.6,204.8 664.1,206.7 669.6,207.5 674.3,211.7 679.0,211.4 683.7,213.7 686.5,214.2 682.1,217.7 679.0,217.3 678.2,220.0 674.3,220.8 674.6,225.2 668.0,223.9 663.3,224.7 659.4,225.5 657.0,226.7 652.3,224.1 646.1,223.1 640.6,220.0 636.7,220.8 636.3,226.6 632.0,225.5 631.2,225.8 629.6,223.9 628.0,221.6 629.6,220.0 632.0,217.7 626.5,218.4 624.9,219.2 622.5,217.7"/>
<polygon fill="#c7e3c6" points="636.3,226.6 636.7,220.8 640.6,220.0 646.1,223.1 652.3,224.1 657.0,226.7 659.4,225.5 660.2,227.8 663.3,228.6 657.8,229.4 654.7,233.0 653.1,232.7 650.0,234.4 644.8,234.1 643.7,232.5 638.2,231.4 634.3,232.5 632.7,232.9 632.0,229.4 632.0,226.3"/>
<polygon fill="#f2f8f1" points="631.8,225.6 636.3,226.6 639.8,224.7 642.9,225.5 645.3,226.7 649.2,230.2 653.1,232.7 650.0,234.4 644.8,234.1 643.7,232.5 638.2,231.4 634.3,232.5 632.7,232.9 632.0,229.4"/>
<polygon fill="#c7e3c6" points="659.4,225.5 663.3,224.7 668.0,223.9 674.6,225.2 673.5,227.8 666.4,229.4 665.6,232.5 660.9,233.3 655.5,233.3 654.7,233.0 657.8,229.4 663.3,228.6 660.2,227.8"/>
<polygon fill="#f2f8f1" points="643.7,238.8 644.5,241.9 646.1,245.1 653.1,245.1 657.8,241.9 660.2,238.0 660.9,234.1 665.6,232.5 660.9,233.3 655.5,233.3 654.7,233.0 653.1,232.7 650.0,234.4 644.8,234.1"/>
<polygon fill="#5aa85b" points="645.3,251.8 653.1,251.5 655.5,254.2 660.2,253.1 658.6,248.2 662.5,245.1 665.6,242.7 665.6,238.8 670.3,235.7 665.6,233.3 660.9,234.1 660.2,238.0 657.8,241.9 653.1,245.1 646.1,245.1"/>
<polygon fill="#5aa85b" points="618.2,232.9 619.1,229.1 624.1,229.9 625.7,232.4 629.6,233.6 633.5,233.5 632.7,232.9 634.3,232.5 638.2,231.4 643.7,232.5 644.8,234.1 643.7,238.8 644.5,241.9 646.1,245.1 645.3,251.8 639.0,251.0 637.4,248.8 634.3,249.6 629.6,247.6 627.6,244.0 624.9,244.4 624.1,243.5 623.6,242.7 621.0,239.6 620.2,237.2"/>
<polygon fill="#96cc94" points="615.3,233.2 618.2,232.9 620.2,237.2 621.0,239.6 623.6,242.7 624.1,243.5 623.8,244.3 621.8,245.7 618.6,245.5 613.1,242.3 610.0,240.8 613.1,237.2"/>
<polygon fill="#c7e3c6" points="606.4,233.6 611.6,233.5 615.3,233.2 613.1,237.2 610.0,240.8 605.3,239.6 605.0,236.8 605.3,235.0"/>
<polygon fill="#c7e3c6" points="603.7,239.6 605.0,236.8 605.3,239.6 610.0,240.8 606.9,242.7 603.7,245.1 602.6,242.3"/>
<polygon fill="#5aa85b" points="603.7,247.4 606.9,242.7 610.0,240.8 613.1,242.3 618.6,245.5 621.8,245.7 624.1,247.4 627.2,250.6 629.6,252.9 635.9,255.7 635.1,260.0 630.4,261.5 624.9,263.1 621.0,264.2 616.8,263.9 615.5,265.6 611.6,260.0 610.0,256.8 606.9,251.3"/>
<polygon fill="#c7e3c6" points="615.5,265.6 616.8,263.9 621.0,264.2 624.9,263.1 630.4,261.5 632.0,265.3 624.9,269.4 619.4,271.2 617.1,271.4 615.8,267.8"/>
<polygon fill="#c7e3c6" points="635.9,255.7 637.0,252.9 638.2,254.0 642.6,256.0 640.6,259.2 639.5,261.5 637.4,263.1 635.1,264.7 632.0,265.3 630.4,261.5 635.1,260.0"/>
<polygon fill="#c7e3c6" points="629.6,252.9 633.5,253.4 637.0,250.9 637.0,252.9 635.9,255.7"/>
<polygon fill="#5aa85b" points="655.5,254.2 657.0,256.4 659.4,258.7 663.0,261.5 664.1,266.2 666.1,271.2 668.8,277.4 670.3,278.6 671.4,277.4 674.1,275.2 674.7,270.1 674.6,266.5 678.2,264.7 681.3,261.5 684.9,259.2 685.2,257.5 688.4,257.1 688.4,256.0 687.6,252.9 686.8,249.8 689.1,250.4 693.1,252.1 693.8,255.3 695.1,255.3 697.0,252.1 698.1,249.0 701.4,247.1 698.5,245.4 693.1,247.7 689.1,249.1 686.8,248.2 687.1,249.9 681.3,248.4 675.8,244.0 672.7,242.4 672.4,240.4 673.5,237.2 670.8,235.7 670.3,235.7 665.6,238.8 665.6,242.7 662.5,245.1 658.6,248.2 660.2,253.1"/>
<polygon fill="#c7e3c6" points="686.8,249.8 689.1,250.4 693.1,252.1 693.8,255.3 693.1,258.1 690.7,256.8 688.4,257.1 688.4,256.0 687.6,252.9"/>
<polygon fill="#c7e3c6" points="674.4,246.2 676.1,244.0 680.5,246.0 687.1,247.6 687.1,249.9 681.3,248.4 679.0,248.5"/>
<polygon fill="#96cc94" points="673.9,281.1 674.3,275.9 675.7,276.7 677.1,279.5 676.1,281.6 674.6,281.9"/>
<polygon fill="#1a531b" points="664.2,229.6 666.4,229.4 673.5,227.8 674.6,225.2 674.3,220.8 678.2,220.0 679.0,217.3 682.1,217.7 686.5,214.2 690.7,217.7 691.5,220.8 697.8,222.0 700.9,224.4 708.0,224.7 713.4,226.1 718.1,224.9 723.6,222.8 723.2,221.3 726.8,221.1 733.0,218.4 736.2,218.1 731.5,213.3 733.5,213.7 736.9,210.6 738.5,207.8 745.6,208.2 748.7,213.4 753.4,216.1 760.1,215.6 757.3,220.8 754.2,220.9 753.7,225.0 749.5,225.5 743.7,228.6 740.1,227.8 739.3,230.2 733.8,229.9 733.3,231.0 735.4,233.0 740.9,232.7 737.7,234.9 735.7,236.5 737.7,238.8 739.8,241.6 739.9,242.9 740.1,244.6 739.1,247.4 736.3,251.3 733.8,253.1 731.5,255.4 727.5,256.4 722.8,257.6 721.6,258.7 720.6,257.5 718.1,257.6 716.1,255.6 713.4,254.8 709.0,256.0 708.0,256.4 706.4,257.6 704.0,256.8 703.6,253.7 701.7,251.3 703.2,248.1 701.4,247.1 698.5,245.4 693.1,247.7 689.1,247.4 686.8,248.2 687.1,247.6 680.5,246.0 676.1,244.0 672.7,242.4 672.4,240.4 673.5,237.2 670.8,235.7 665.6,233.3"/>
<polygon fill="#1a531b" points="719.1,261.2 721.3,260.0 722.8,260.6 720.5,262.8"/>
<polygon fill="#c7e3c6" points="686.5,214.2 689.9,212.2 693.1,211.9 701.7,213.3 702.5,209.8 711.9,212.5 718.1,214.0 727.5,212.6 731.5,213.3 736.2,218.1 733.0,218.4 726.8,221.1 723.2,221.3 723.6,222.8 718.1,224.9 713.4,226.1 708.0,224.7 700.9,224.4 697.8,222.0 691.5,220.8 690.7,217.7"/>
<polygon fill="#f2f8f1" points="693.4,258.4 694.6,260.3 696.7,262.2 696.7,266.2 697.8,266.5 701.8,265.4 702.2,267.8 703.2,270.9 703.4,275.6 704.8,274.1 703.2,268.6 704.0,265.9 702.5,263.4 705.6,259.2 707.2,257.6 704.0,256.8 703.6,253.7 701.7,251.3 703.2,248.1 701.4,247.1 698.1,249.0 697.0,252.1 695.1,255.3"/>
<polygon fill="#96cc94" points="703.2,270.9 703.6,274.8 702.9,278.5 705.3,281.1 707.2,280.6 708.7,281.6 706.4,279.5 704.3,276.9 704.8,274.1 705.6,271.4 707.0,270.1 709.5,272.2 710.0,269.4 713.4,268.9 714.2,267.0 712.7,263.9 708.7,263.1 706.4,260.7 705.6,259.2 702.5,263.4 704.0,265.9 703.2,268.6"/>
<polygon fill="#96cc94" points="709.0,256.0 716.1,255.6 718.1,257.6 715.8,260.0 714.7,261.5 717.4,265.4 719.7,269.4 720.0,273.3 716.6,275.0 713.1,277.8 713.4,274.8 715.8,273.3 717.4,271.7 717.4,268.3 717.4,266.2 715.8,265.4 713.4,262.3 711.9,261.2 710.6,258.7"/>
<polygon fill="#e1f0e0" points="706.4,259.2 708.0,256.4 709.0,256.0 710.6,258.7 711.9,261.2 713.4,262.3 715.8,265.4 717.4,268.3 714.8,269.5 714.2,267.0 712.7,263.9 708.7,263.1 706.4,260.7"/>
<polygon fill="#c7e3c6" points="709.5,272.2 710.3,274.1 713.1,275.0 715.8,273.3 717.4,271.7 717.4,268.3 714.8,269.5 713.4,268.9 710.0,269.4"/>
<polygon fill="#5aa85b" points="706.1,281.3 708.4,282.2 709.7,281.6 711.1,284.2 711.1,287.4 712.3,289.1 711.1,289.3 707.6,286.9 706.1,283.5"/>
<polygon fill="#96cc94" points="719.7,288.9 720.8,292.9 721.6,295.8 723.9,296.0 728.3,297.3 731.0,296.8 731.5,294.4 733.0,290.0 733.8,287.9 735.4,283.5 733.0,280.6 731.5,280.6 729.9,282.8 726.8,285.0 723.6,287.4 722.1,288.5 720.6,288.2"/>
<polygon fill="#5aa85b" points="720.6,288.2 722.8,289.3 725.7,288.9 728.3,288.9 729.9,286.6 731.5,284.6 733.8,284.2 735.4,283.5 733.0,280.6 731.5,280.6 729.9,282.8 726.8,285.0 723.6,287.4 722.1,288.5"/>
<polygon fill="#96cc94" points="698.2,282.7 701.7,283.2 706.2,287.9 708.0,288.8 711.1,291.3 712.7,293.7 715.0,296.0 715.0,298.4 714.7,300.4 712.7,300.4 709.2,297.6 706.4,293.7 703.6,288.9 701.2,286.3"/>
<polygon fill="#96cc94" points="713.7,302.0 715.0,300.7 718.1,301.0 722.8,301.5 728.3,303.4 728.2,304.9 722.8,304.1 718.1,303.5 715.6,302.9"/>
<polygon fill="#96cc94" points="729.1,305.1 730.7,304.3 735.4,304.6 735.4,305.2 730.7,305.4"/>
<polygon fill="#96cc94" points="736.2,304.8 741.6,304.1 741.6,304.8 736.9,305.2"/>
<polygon fill="#96cc94" points="742.4,307.3 747.9,304.6 744.8,306.2"/>
<polygon fill="#96cc94" points="736.2,307.0 738.2,307.3 736.9,306.2"/>
<polygon fill="#96cc94" points="736.2,299.9 735.8,296.8 735.1,295.2 736.6,291.3 737.7,289.7 744.0,288.9 744.8,289.4 737.7,290.5 738.5,292.9 741.6,292.9 739.3,294.4 740.9,298.4 738.5,297.6 737.7,296.0 737.6,299.9"/>
<polygon fill="#96cc94" points="748.7,287.9 750.3,288.9 749.5,290.5 748.8,292.1 748.4,289.7"/>
<polygon fill="#96cc94" points="746.3,296.0 749.5,296.2 747.9,297.3"/>
<polygon fill="#96cc94" points="753.9,292.6 759.3,292.7 761.2,296.5 764.4,293.7 769.8,295.4 769.8,305.6 766.7,303.8 765.1,304.5 764.4,302.3 765.9,301.5 760.4,298.4 758.1,297.6 755.7,295.7 757.3,295.2 754.6,293.7"/>
<polygon fill="#f2f8f1" points="769.8,295.4 776.1,297.9 777.7,299.9 780.0,300.7 781.1,303.8 783.9,307.8 780.8,307.0 778.5,305.1 774.5,303.5 773.0,305.4 769.8,305.6"/>
<polygon fill="#f2f8f1" points="781.6,299.9 784.7,299.6 787.1,297.9 786.3,300.4 782.4,301.0"/>
<polygon fill="#f2f8f1" points="784.7,295.7 787.1,296.8 788.7,298.7 787.1,297.6"/>
<polygon fill="#f2f8f1" points="792.6,301.0 793.4,302.3 791.8,301.5"/>
<polygon fill="#f2f8f1" points="794.9,303.5 798.1,304.3 796.5,304.6"/>
<polygon fill="#f2f8f1" points="799.6,305.4 801.7,306.5 800.4,307.0"/>
<polygon fill="#f2f8f1" points="805.9,323.0 810.6,326.2 808.2,325.0"/>
<polygon fill="#f2f8f1" points="826.6,318.7 828.6,319.2 827.8,319.8 826.7,319.5"/>
<polygon fill="#f2f8f1" points="809.8,314.5 811.8,316.4 810.9,316.4"/>
<polygon fill="#96cc94" points="737.7,262.2 740.5,262.3 740.7,264.7 739.8,267.0 740.5,269.0 743.5,270.6 743.2,271.7 740.9,270.6 739.3,269.4 737.7,268.6 736.6,265.9"/>
<polygon fill="#96cc94" points="740.1,280.3 744.8,276.4 747.1,280.3 745.6,281.9 742.4,279.5"/>
<polygon fill="#96cc94" points="739.8,272.7 742.0,273.3 740.9,274.8 739.9,274.7"/>
<polygon fill="#96cc94" points="743.7,271.6 746.0,272.2 745.1,274.8 743.8,274.2"/>
<polygon fill="#96cc94" points="732.6,278.1 736.3,274.1 736.3,275.2 733.8,278.1"/>
<polygon fill="#96cc94" points="740.7,274.2 742.6,274.8 742.0,276.9 740.9,276.3"/>
<polygon fill="#96cc94" points="742.4,273.6 743.4,275.3 742.9,276.3 742.3,275.3"/>
<polygon fill="#96cc94" points="737.7,270.1 739.3,270.3 738.8,272.2 737.9,271.6"/>
<polygon fill="#96cc94" points="737.3,255.3 738.5,251.7 740.1,252.1 738.2,256.8"/>
<polygon fill="#e1f0e0" points="743.7,228.6 744.8,232.1 747.3,237.2 750.7,236.5 751.8,234.1 750.3,231.0 748.7,228.9 752.1,227.4 753.7,225.0 749.5,225.5"/>
<polygon fill="#5aa85b" points="747.1,232.2 747.3,237.2 750.7,236.5 751.8,234.1 750.3,231.0"/>
<polygon fill="#5aa85b" points="754.0,238.0 756.5,235.8 761.2,235.5 763.6,233.3 766.7,231.9 768.3,228.6 769.1,226.6 770.6,227.1 771.4,230.2 769.8,233.3 769.5,235.4 768.0,236.5 766.4,236.9 763.6,237.2 760.8,238.3 757.3,237.7"/>
<polygon fill="#5aa85b" points="751.8,238.8 755.4,238.5 754.6,242.1 752.9,242.4"/>
<polygon fill="#5aa85b" points="756.5,238.0 759.7,237.7 758.9,239.1"/>
<polygon fill="#5aa85b" points="768.3,226.3 769.1,223.4 771.1,220.2 776.9,223.4 773.5,225.5 769.8,225.8"/>
<polygon fill="#c7e3c6" points="539.7,235.2 545.5,236.3 546.2,237.2 547.0,240.8 543.4,241.9 541.1,245.1 535.3,246.3 535.3,247.9 528.2,247.9 530.1,245.9 533.5,244.6 533.9,242.7 535.6,239.1 538.2,237.9"/>
<polygon fill="#e1f0e0" points="535.3,247.9 535.3,250.6 530.1,254.5 528.5,257.9 522.1,258.7 523.0,253.7 526.2,250.2 528.2,247.9"/>
<polygon fill="#c7e3c6" points="545.5,236.3 550.5,234.1 553.6,233.6 562.4,233.5 561.7,237.1 560.7,238.8 563.8,244.0 564.4,249.0 567.5,253.7 560.7,258.7 555.5,261.2 553.9,261.5 541.4,252.1 535.3,247.9 535.3,246.3 541.1,245.1 543.4,241.9 547.0,240.8 546.2,237.2"/>
<polygon fill="#c7e3c6" points="562.4,233.5 564.9,233.0 566.1,233.6 565.0,237.2 566.9,239.3 564.6,241.5 563.8,244.0 560.7,238.8 561.7,237.1"/>
<polygon fill="#c7e3c6" points="566.9,239.3 572.7,240.7 579.5,243.8 580.2,241.2 584.9,240.2 588.1,241.6 588.1,256.8 588.1,260.0 586.5,260.7 573.2,254.5 570.8,255.7 567.5,253.7 564.4,249.0 563.8,244.0 564.6,241.5"/>
<polygon fill="#5aa85b" points="588.1,241.6 594.3,242.9 597.5,241.8 602.5,242.3 603.6,245.1 602.6,247.7 601.9,249.1 604.5,253.7 606.7,256.8 588.1,256.8"/>
<polygon fill="#c7e3c6" points="586.5,260.7 588.1,260.0 588.1,256.8 606.7,256.8 607.5,262.3 609.2,263.4 606.9,267.8 605.9,269.0 602.5,274.8 603.0,278.0 601.4,281.9 603.7,283.8 602.2,284.7 597.5,285.5 592.0,283.5 588.1,281.4 584.9,278.0 584.2,274.4 584.6,271.7 583.4,269.4 586.5,267.0"/>
<polygon fill="#e1f0e0" points="529.8,268.3 530.1,271.7 532.0,272.5 535.6,274.1 535.9,274.8 540.3,275.3 541.4,272.5 545.0,268.6 549.2,268.0 550.9,267.3 554.5,267.0 555.5,265.0 555.5,261.2 553.9,261.5 541.4,252.1 538.7,252.3 540.3,265.6 531.2,267.2"/>
<polygon fill="#f2f8f1" points="522.1,258.7 523.4,261.2 523.0,266.1 526.0,265.3 529.8,268.3 531.2,267.2 540.3,265.6 538.7,252.3 541.4,252.1 535.3,247.9 535.3,250.6 530.1,254.5 528.5,257.9"/>
<polygon fill="#c7e3c6" points="521.5,268.3 523.0,266.1 526.0,265.3 529.8,268.3 530.1,271.7 527.4,271.6 522.7,271.9"/>
<polygon fill="#c7e3c6" points="522.7,271.9 527.4,271.6 530.1,271.7 532.0,272.5 535.6,274.1 535.9,274.8 540.3,275.3 541.4,272.5 545.0,268.6 549.2,268.0 550.9,267.3 552.3,271.4 554.5,273.0 554.7,275.6 553.1,281.3 550.5,281.9 545.8,283.8 542.6,283.2 537.1,284.4 534.0,282.7 530.9,280.5 528.1,278.0 527.7,276.4 525.4,274.2"/>
<polygon fill="#e1f0e0" points="525.4,274.2 527.4,271.6 532.0,272.5 535.6,274.1 535.9,274.8 533.2,278.0 528.1,278.0 527.7,276.4"/>
<polygon fill="#c7e3c6" points="535.9,274.8 540.3,275.3 544.5,276.4 544.2,283.5 542.6,283.2 537.1,284.4 535.6,279.5"/>
<polygon fill="#f2f8f1" points="550.9,267.3 554.5,267.0 555.5,265.0 555.5,261.2 560.7,258.7 567.5,253.7 570.8,255.7 573.2,254.5 572.7,260.0 574.0,264.7 573.2,266.2 570.2,269.4 568.2,270.6 562.2,270.9 559.1,270.1 555.2,270.1 554.5,273.0 552.3,271.4"/>
<polygon fill="#96cc94" points="553.1,281.3 554.7,275.6 554.5,273.0 555.2,270.1 559.1,270.1 562.2,270.9 568.2,270.6 570.2,269.4 571.6,272.5 570.1,275.6 568.5,278.0 567.4,280.3 564.3,283.5 562.2,284.2 558.3,284.6 556.0,281.4"/>
<polygon fill="#f2f8f1" points="573.2,254.5 586.5,260.7 586.5,267.0 583.4,269.4 584.6,271.7 584.2,274.4 582.6,276.4 578.7,277.2 573.2,279.5 571.6,278.8 572.4,275.6 571.6,272.5 570.2,269.4 573.2,266.2 574.0,264.7 572.7,260.0"/>
<polygon fill="#c7e3c6" points="562.2,284.1 563.9,286.6 564.6,287.9 566.6,287.7 574.0,288.2 572.4,285.5 571.6,281.9 573.2,279.5 571.6,278.8 572.4,275.6 571.6,272.5 570.1,275.6 568.5,278.0 567.4,280.3 564.3,283.5"/>
<polygon fill="#f2f8f1" points="571.6,281.9 572.4,285.5 574.8,285.8 577.9,284.7 584.2,284.6 588.1,283.2 592.0,283.5 588.1,281.4 584.9,278.0 582.6,276.4 578.7,277.2 573.2,279.5"/>
<polygon fill="#c7e3c6" points="563.9,286.6 563.5,289.7 562.7,292.9 564.6,296.0 566.5,297.6 567.7,299.1 569.3,298.8 571.6,298.4 573.8,296.0 576.6,291.8 577.4,287.9 577.9,284.7 574.8,285.8 574.0,288.2 566.6,287.7 564.6,287.9"/>
<polygon fill="#c7e3c6" points="567.7,299.1 568.2,300.7 569.3,300.4 574.0,300.7 576.3,303.8 579.5,303.8 583.1,302.7 583.4,306.2 585.7,308.5 587.3,308.9 588.9,309.3 592.0,310.1 595.6,312.5 595.1,310.1 593.6,305.4 596.7,304.1 594.7,298.4 594.7,295.2 595.3,293.5 595.9,289.7 597.9,287.7 596.7,285.3 592.0,283.5 588.1,283.2 584.2,284.6 577.9,284.7 577.4,287.9 576.6,291.8 573.8,296.0 571.6,298.4 569.3,298.8"/>
<polygon fill="#f2f8f1" points="568.2,300.7 569.3,304.6 570.1,308.2 568.5,312.5 567.4,318.3 569.9,317.9 574.0,318.6 577.9,318.6 581.8,319.5 585.3,318.7 583.4,316.4 583.4,311.7 586.5,311.7 585.7,308.5 583.4,306.2 583.1,302.7 579.5,303.8 576.3,303.8 574.0,300.7 569.3,300.4"/>
<polygon fill="#e1f0e0" points="567.4,318.3 569.9,317.9 574.0,318.6 577.9,318.6 581.8,319.5 585.3,318.7 588.1,319.2 587.3,319.5 581.8,320.0 581.8,325.8 580.2,325.8 580.2,335.8 575.5,336.4 574.8,336.1 572.9,333.6 571.6,327.3 569.3,323.4"/>
<polygon fill="#5aa85b" points="574.8,336.1 575.5,336.4 580.2,335.8 580.2,330.2 584.9,330.9 588.9,331.6 591.2,328.9 595.1,326.1 598.3,326.6 599.0,332.8 600.5,333.3 599.8,336.0 597.5,338.3 593.6,341.9 589.6,344.3 583.4,344.9 580.2,345.8 577.9,344.9 577.1,342.2"/>
<polygon fill="#c7e3c6" points="591.2,337.5 594.8,336.7 595.1,338.6 592.8,339.3"/>
<polygon fill="#c7e3c6" points="580.2,325.8 581.8,325.8 581.8,320.0 587.3,319.5 588.9,319.2 591.2,322.6 595.1,326.1 591.2,328.9 588.9,331.6 584.9,330.9 580.2,330.2"/>
<polygon fill="#c7e3c6" points="588.9,319.2 592.0,317.2 595.9,315.7 598.3,316.4 600.5,317.5 600.6,321.9 599.0,325.5 598.3,326.6 595.1,326.1 591.2,322.6"/>
<polygon fill="#c7e3c6" points="583.4,311.7 583.4,316.4 585.3,318.7 588.1,319.2 592.0,317.2 595.9,315.7 596.4,314.0 601.1,313.2 600.3,310.1 601.4,307.8 597.5,304.9 593.6,305.4 595.1,310.1 595.6,312.5 592.0,310.1 588.9,309.3 587.3,308.9 585.7,308.5 586.5,311.7"/>
<polygon fill="#c7e3c6" points="612.4,307.6 612.4,314.8 607.7,318.7 603.7,322.6 604.5,325.8 604.5,328.9 600.5,332.4 600.5,333.3 599.0,332.8 598.3,326.6 599.0,325.5 600.6,321.9 600.5,317.5 598.3,316.4 596.4,315.7 596.4,314.0 601.1,313.2 603.7,314.0 604.2,317.9 605.0,316.4 603.7,309.3 607.7,309.3"/>
<polygon fill="#c7e3c6" points="601.1,313.2 603.0,306.2 603.7,309.3 605.0,316.4 604.2,317.9 603.7,314.0"/>
<polygon fill="#c7e3c6" points="596.7,304.1 597.5,304.9 601.4,307.8 603.0,306.2 603.7,309.3 607.7,309.3 612.4,307.6 610.5,303.8 609.7,301.5 610.3,298.7 608.0,296.8 602.2,292.9 597.2,292.9 595.3,293.5 594.7,295.2 594.7,298.4"/>
<polygon fill="#c7e3c6" points="602.2,292.9 608.0,296.8 610.3,298.7 611.6,296.0 614.1,294.0 613.1,286.9 614.7,285.0 611.6,284.7 609.2,285.8 605.2,284.1 603.7,283.8 602.2,284.7 603.0,289.7"/>
<polygon fill="#c7e3c6" points="595.3,293.5 597.2,292.9 602.2,292.9 603.0,289.7 602.2,284.7 597.5,285.5 597.9,287.7 595.9,289.7"/>
<polygon fill="#c7e3c6" points="601.4,281.9 603.7,283.8 605.2,284.1 609.2,285.8 611.6,284.7 614.7,285.0 617.1,283.6 619.4,283.5 624.1,278.8 616.8,276.4 616.0,274.1 614.2,272.8 611.9,268.6 605.9,269.0 602.5,274.8 603.0,278.0"/>
<polygon fill="#c7e3c6" points="605.9,269.0 606.9,267.8 609.2,263.4 610.8,267.0 614.2,270.1 616.6,271.9 614.2,272.8 611.9,268.6"/>
<polygon fill="#f2f8f1" points="613.1,294.0 614.1,294.0 617.1,290.5 621.0,287.4 624.1,284.2 626.5,281.1 628.8,274.8 629.3,272.8 625.4,273.7 617.8,274.8 616.6,273.3 616.0,274.1 616.8,276.4 624.1,278.8 619.4,283.5 617.1,283.6 614.7,285.0 613.1,286.9"/>
<polygon fill="#c7e3c6" points="626.2,310.1 628.0,315.6 626.9,317.9 624.1,325.8 622.5,330.5 619.4,331.3 617.1,325.0 617.8,322.6 618.2,317.9 621.8,316.1 624.1,312.9"/>
<polygon fill="#276b2a" points="727.5,325.8 731.8,323.6 738.5,321.9 740.5,318.7 742.4,317.2 744.8,314.8 747.1,313.2 749.5,314.8 751.8,314.6 752.9,311.7 756.5,309.5 760.4,310.4 763.1,310.3 762.0,312.5 761.2,314.8 764.4,316.8 767.2,318.6 769.5,318.6 770.6,314.8 770.8,310.9 772.2,308.1 773.8,311.4 774.2,314.0 776.6,314.8 777.7,319.8 782.1,323.3 784.3,326.6 789.0,331.3 789.6,336.1 788.7,339.9 787.9,342.2 784.3,347.6 783.9,350.1 778.2,352.4 774.5,351.2 770.6,351.3 768.0,349.7 767.5,347.2 765.1,347.1 764.7,343.0 762.0,345.8 760.4,343.8 757.3,341.4 754.2,340.7 749.5,341.4 744.8,342.7 742.4,344.6 736.2,345.0 733.0,346.3 729.1,344.9 730.2,340.7 728.9,336.7 726.4,332.2 727.2,327.3"/>
<polygon fill="#276b2a" points="775.5,355.1 781.3,355.4 780.8,359.0 778.9,359.6 776.4,357.6"/>
<polygon fill="#5aa85b" points="819.5,345.2 822.0,346.9 824.4,349.0 828.6,350.4 827.0,352.7 825.5,354.8 823.1,356.5 822.7,353.8 821.2,352.7 822.3,350.5"/>
<polygon fill="#5aa85b" points="819.4,354.8 821.9,356.2 820.5,358.7 817.2,360.9 816.1,363.4 812.9,364.3 809.8,363.1 812.9,360.2 816.5,358.4 818.4,355.5"/>
<polygon fill="#e39c10" points="267.0,317.2 267.6,316.5 268.3,317.2 267.6,317.8"/>
<polygon fill="#e39c10" points="827.2,318.7 827.8,318.1 828.5,318.7 827.8,319.4"/>
<polygon fill="#e39c10" points="278.0,312.8 278.6,312.2 279.2,312.8 278.6,313.3"/>
<polygon fill="#e39c10" points="273.5,324.2 273.9,323.8 274.3,324.2 273.9,324.6"/>
<polygon fill="#e39c10" points="311.1,317.5 311.5,317.0 311.9,317.5 311.5,317.9"/>
<polygon fill="#e39c10" points="314.2,318.9 314.6,318.5 315.1,318.9 314.6,319.3"/>
<polygon fill="#e39c10" points="329.1,305.4 329.5,305.0 329.9,305.4 329.5,305.8"/>
<polygon fill="#e39c10" points="405.7,292.1 406.3,291.5 406.9,292.1 406.3,292.6"/>
<polygon fill="#e39c10" points="635.5,298.5 635.9,298.2 636.2,298.5 635.9,298.9"/>
<polygon fill="#e39c10" points="638.7,323.1 639.2,322.6 639.7,323.1 639.2,323.6"/>
<polygon fill="#e39c10" points="635.4,324.4 635.9,323.9 636.3,324.4 635.9,324.8"/>
<polygon fill="#e39c10" points="819.6,288.2 820.0,287.7 820.4,288.2 820.0,288.6"/>
<polygon fill="#e39c10" points="823.5,293.5 823.9,293.1 824.3,293.5 823.9,293.9"/>
<polygon fill="#e39c10" points="537.5,194.1 537.9,193.7 538.4,194.1 537.9,194.6"/>
<polygon fill="#e39c10" points="523.3,247.1 523.8,246.5 524.4,247.1 523.8,247.7"/>
<polygon fill="#e39c10" points="526.5,246.6 527.0,246.2 527.4,246.6 527.0,247.1"/>
<polygon fill="#e39c10" points="510.8,266.2 511.3,265.7 511.8,266.2 511.3,266.7"/>
<polygon fill="#e39c10" points="511.7,267.8 512.1,267.4 512.5,267.8 512.1,268.2"/>
<polygon fill="#e39c10" points="504.6,231.0 505.0,230.5 505.4,231.0 505.0,231.4"/>
<polygon fill="#e39c10" points="447.0,240.7 447.4,240.3 447.7,240.7 447.4,241.0"/>
<polygon fill="#e39c10" points="662.9,286.6 663.3,286.2 663.6,286.6 663.3,287.0"/>
<polygon fill="#e39c10" points="453.0,267.8 453.3,267.4 453.7,267.8 453.3,268.1"/>
<polygon fill="#e39c10" points="452.2,270.9 452.5,270.6 452.9,270.9 452.5,271.3"/>
<polygon fill="#e39c10" points="445.1,262.6 445.5,262.3 445.8,262.6 445.5,263.0"/>
<polygon fill="#e39c10" points="623.0,309.3 623.3,309.0 623.7,309.3 623.3,309.7"/>
<polygon fill="#e39c10" points="617.4,310.1 617.8,309.7 618.3,310.1 617.8,310.5"/>
<polygon fill="#e39c10" points="809.9,292.1 810.3,291.7 810.6,292.1 810.3,292.4"/>
<polygon fill="#e39c10" points="816.4,280.3 816.9,279.9 817.3,280.3 816.9,280.8"/>
<polygon fill="#e39c10" points="796.1,280.6 796.5,280.3 796.8,280.6 796.5,281.0"/>
<polygon fill="#e39c10" points="765.0,276.4 765.3,276.1 765.7,276.4 765.3,276.8"/>
<polygon fill="#e39c10" points="775.4,270.3 775.8,269.9 776.2,270.3 775.8,270.7"/>
<polygon fill="#e39c10" points="539.8,316.2 540.1,315.9 540.5,316.2 540.1,316.6"/>
<polygon fill="#e39c10" points="526.0,303.8 526.3,303.5 526.7,303.8 526.3,304.2"/>
<polygon fill="#e39c10" points="559.4,290.8 559.9,290.4 560.3,290.8 559.9,291.3"/>
<polygon fill="#e39c10" points="562.1,285.8 562.5,285.4 563.0,285.8 562.5,286.2"/>
<polyline fill="none" stroke-width="1.10" points="352.3,176.4 359.1,175.6 367.0,177.3"/>
<polyline fill="none" stroke-width="1.10" points="363.6,178.4 372.7,179.8 381.8,180.5"/>
<polyline fill="none" stroke-width="1.10" points="356.8,177.8 362.5,179.8"/>
<polyline fill="none" stroke-width="1.10" points="372.7,177.3 376.1,183.0"/>
<polyline fill="none" stroke-width="1.10" points="361.4,171.4 372.7,172.0 379.5,172.5"/>
<polyline fill="none" stroke-width="1.10" points="387.5,172.7 393.2,174.4 397.7,176.1"/>
<polyline fill="none" stroke-width="1.10" points="395.5,169.9 401.1,172.7 409.1,174.4"/>
<polyline fill="none" stroke-width="1.10" points="398.9,177.3 406.8,178.4"/>
<polyline fill="none" stroke-width="1.10" points="402.3,164.2 411.4,165.3 418.2,167.0"/>
<polyline fill="none" stroke-width="1.10" points="418.2,163.6 429.5,164.8 440.9,163.6"/>
<polyline fill="none" stroke-width="1.10" points="409.1,168.2 420.5,168.2"/>
<polyline fill="none" stroke-width="1.10" points="427.3,167.0 436.4,165.3"/>
<polyline fill="none" stroke-width="1.10" points="413.6,179.8 422.7,181.8 429.5,184.1"/>
<polyline fill="none" stroke-width="1.10" points="420.5,184.7 429.5,186.4 438.6,187.5"/>
<polyline fill="none" stroke-width="1.10" points="434.1,183.0 443.2,186.4"/>
<polyline fill="none" stroke-width="1.10" points="413.6,173.3 418.2,174.4"/>
<polyline fill="none" stroke-width="1.10" points="389.8,168.8 395.5,171.0"/>
<polyline fill="none" stroke-width="1.10" points="384.1,174.4 388.6,177.3"/>
</g></svg></div>
<svg class="a" style="left:0;top:54px" width="80" height="130" viewBox="234 134 80 130"><g fill="#034a05"><rect x="258" y="150" width="16" height="48" rx="8"/><rect x="249.7" y="166" width="33" height="16.2" rx="8"/><path d="M263,202.8 h6 l5,5 v38 l-5,5 h-6 l-5,-5 v-38 z"/></g><g fill="#fdfdff"><path d="M261,161.6 L270.4,161.6 L265.7,153.4 Z"/><path d="M261,186.2 L270.4,186.2 L265.7,194.4 Z"/><path d="M261.3,169.1 L261.3,178.6 L252.8,174.1 Z"/><path d="M270.1,169.1 L270.1,178.6 L279.2,174.1 Z"/><rect x="261.2" y="210.9" width="9.4" height="2.2"/><rect x="264.7" y="207.2" width="2.1" height="9"/><rect x="261.2" y="240.9" width="9.4" height="2.1"/></g><g fill="none" stroke="#8a8ae6" stroke-width="0.8"><circle cx="265.9" cy="226.8" r="6.9"/><ellipse cx="265.9" cy="226.8" rx="3.2" ry="6.9"/><line x1="258.5" y1="226.8" x2="273.3" y2="226.8"/><line x1="265.9" y1="219.9" x2="265.9" y2="233.7"/><path d="M260,223 Q265.9,221.5 271.8,223 M260,230.6 Q265.9,232.1 271.8,230.6"/></g></svg>
<div class="a" style="left:9px;top:360px;width:135px;height:18px;background:linear-gradient(to right,#ffffff 0%,#d0e6d0 20%,#97c997 45%,#4f9f4f 68%,#0f730f 86%,#004c00 100%)"></div>
<div class="a" style="left:9px;top:361.04px;font-size:10px;line-height:12px;color:#222">0</div>
<div class="a" style="left:88.5px;top:361.04px;font-size:10px;line-height:12px;color:#222;width:32px;text-align:right">79,391</div>
<div class="ln" style="top:387px"></div>
<div class="a hd" style="left:18px;top:396.47px">Report View by Selection</div>
<div class="a hd" style="left:561px;top:396.47px;color:#1f5c87">Customize</div>
<div class="ln" style="top:419px"></div>
<div class="a" style="left:0;top:420px;width:638px;height:34px;background:#f4f4f4"></div>
<div class="th" style="left:1.8px;top:423.27px;">Total:</div>
<div class="th" style="left:5.8px;top:437.27px;">15</div>
<div class="th" style="left:60.0px;top:429.07px;">Research Fields</div>
<div class="th" style="left:181.0px;top:423.17px;">Web of Science</div>
<div class="th" style="left:188.5px;top:436.87px;">Documents</div>
<div class="th" style="left:306.8px;top:429.47px;color:#4a7db6">Cites</div>
<div class="a" style="left:342px;top:434px;width:0;height:0;border-left:3.8px solid transparent;border-right:3.8px solid transparent;border-top:4.3px solid #5a8ccc"></div>
<div class="th" style="left:395.5px;top:429.47px;">Cites/Paper</div>
<div class="th" style="left:517.0px;top:429.47px;">Top Papers</div>
<div class="a" style="left:0;top:454px;width:621px;height:309px;overflow:hidden;background:#fafafa">
<div class="row" style="top:-13px;height:42px"><div class="c num" style="left:0;width:39px">6</div><div class="c fld" style="left:59px;width:130px;padding-bottom:3px"><div>&nbsp;<br>BIOLOGY &amp;<br>GENETICS</div></div><div class="c num" style="left:150px;width:126px">964</div><div class="c num" style="left:280px;width:95px">26,799</div><div class="c num" style="left:380px;width:100px">27.80</div><div class="bar" style="top:11.5px"><div class="f" style="width:4.0px"></div><div class="v" style="">8</div></div></div>
<div class="row" style="top:28px;height:25px"><div class="c num" style="left:0;width:39px">7</div><div class="c fld" style="left:59px;width:130px;padding-bottom:4px"><div>PHYSICS</div></div><div class="c num" style="left:150px;width:126px">2,129</div><div class="c num" style="left:280px;width:95px">25,808</div><div class="c num" style="left:380px;width:100px">12.12</div><div class="bar" style="top:3.0px"><div class="f" style="width:12.0px"></div><div class="v" style="">23</div></div></div>
<div class="row" style="top:52px;height:30px"><div class="c num" style="left:0;width:39px">8</div><div class="c fld" style="left:59px;width:130px;padding-bottom:3px"><div>ENVIRONMENT/E<br>COLOGY</div></div><div class="c num" style="left:150px;width:126px">1,500</div><div class="c num" style="left:280px;width:95px">24,155</div><div class="c num" style="left:380px;width:100px">16.10</div><div class="bar" style="top:5.5px"><div class="f" style="width:26.0px"></div><div class="v" style="">52</div></div></div>
<div class="row" style="top:81px;height:30px"><div class="c num" style="left:0;width:39px">9</div><div class="c fld" style="left:59px;width:130px;padding-bottom:3px"><div>BIOLOGY &amp;<br>BIOCHEMISTRY</div></div><div class="c num" style="left:150px;width:126px">1,467</div><div class="c num" style="left:280px;width:95px">22,712</div><div class="c num" style="left:380px;width:100px">15.48</div><div class="bar" style="top:5.5px"><div class="f" style="width:6.0px"></div><div class="v" style="">11</div></div></div>
<div class="row" style="top:110px;height:42px"><div class="c num" style="left:0;width:39px">10</div><div class="c fld" style="left:59px;width:130px;padding-bottom:3px"><div>PHARMACOLOG<br>Y &amp;<br>TOXICOLOGY</div></div><div class="c num" style="left:150px;width:126px">895</div><div class="c num" style="left:280px;width:95px">15,080</div><div class="c num" style="left:380px;width:100px">16.85</div><div class="bar" style="top:11.5px"><div class="f" style="width:5.5px"></div><div class="v" style="">10</div></div></div>
<div class="row" style="top:151px;height:30px"><div class="c num" style="left:0;width:39px">11</div><div class="c fld" style="left:59px;width:130px;padding-bottom:3px"><div>COMPUTER<br>SCIENCE</div></div><div class="c num" style="left:150px;width:126px">809</div><div class="c num" style="left:280px;width:95px">8,345</div><div class="c num" style="left:380px;width:100px">10.32</div><div class="bar" style="top:6.5px"><div class="f" style="width:4.5px"></div><div class="v" style="">7</div></div></div>
<div class="row" style="top:180px;height:25px"><div class="c num" style="left:0;width:39px">12</div><div class="c fld" style="left:59px;width:130px;padding-bottom:4px"><div>IMMUNOLOGY</div></div><div class="c num" style="left:150px;width:126px">380</div><div class="c num" style="left:280px;width:95px">5,597</div><div class="c num" style="left:380px;width:100px">14.73</div><div class="bar" style="top:4.0px"><div class="f" style="width:1.5px"></div><div class="v" style="">1</div></div></div>
<div class="row" style="top:204px;height:41px"><div class="c num" style="left:0;width:39px">13</div><div class="c fld" style="left:59px;width:130px;padding-bottom:3px"><div>PLANT &amp;<br>ANIMAL<br>SCIENCE</div></div><div class="c num" style="left:150px;width:126px">580</div><div class="c num" style="left:280px;width:95px">5,253</div><div class="c num" style="left:380px;width:100px">9.06</div><div class="bar" style="top:11.0px"><div class="f" style="width:5.0px"></div><div class="v" style="">9</div></div></div>
<div class="row" style="top:244px;height:42px"><div class="c num" style="left:0;width:39px">14</div><div class="c fld" style="left:59px;width:130px;padding-bottom:3px"><div>SOCIAL<br>SCIENCES,<br>GENERAL</div></div><div class="c num" style="left:150px;width:126px">329</div><div class="c num" style="left:280px;width:95px">4,765</div><div class="c num" style="left:380px;width:100px">14.48</div><div class="bar" style="top:11.5px"><div class="f" style="width:14.0px"></div><div class="v" style="">27</div></div></div>
<div class="row" style="top:285px;height:25px"><div class="c num" style="left:0;width:39px">0</div><div class="c fld" style="left:59px;width:130px;padding-bottom:4px"><div>ALL FIELDS</div></div><div class="c num" style="left:150px;width:126px">34,643</div><div class="c num" style="left:280px;width:95px">585,597</div><div class="c num" style="left:380px;width:100px">16.90</div><div class="bar" style="top:2.0px"><div class="f" style="width:88.0px"></div><div class="v" style="color:#fff">627</div></div></div>
</div>
<div class="a" style="left:621px;top:454px;width:17px;height:308px;background:#f0f0f0"></div>
<div class="a" style="left:623px;top:558px;width:13px;height:188px;background:#c1c1c1"></div>
<div class="a" style="left:625px;top:460px;width:0;height:0;border-left:4px solid transparent;border-right:4px solid transparent;border-bottom:4px solid #505050"></div>
<div class="a" style="left:625px;top:752px;width:0;height:0;border-left:4px solid transparent;border-right:4px solid transparent;border-top:4px solid #a3a3a3"></div>
<div class="a" style="left:0;top:762px;width:621px;height:17px;background:#f0f0f0"></div>
<div class="a" style="left:28px;top:765px;width:576px;height:13px;background:#c1c1c1"></div>
<div class="a" style="left:6px;top:767px;width:0;height:0;border-top:4px solid transparent;border-bottom:4px solid transparent;border-right:4px solid #505050"></div>
<div class="a" style="left:611px;top:767px;width:0;height:0;border-top:4px solid transparent;border-bottom:4px solid transparent;border-left:4px solid #a3a3a3"></div>
<div class="a" style="left:621px;top:762px;width:17px;height:17px;background:#dcdcdc"></div>
<div class="a" style="left:6px;top:631px;width:621px;height:28px;border:3px solid #f3201b;border-radius:4px"></div>
</div>
</body></html>
